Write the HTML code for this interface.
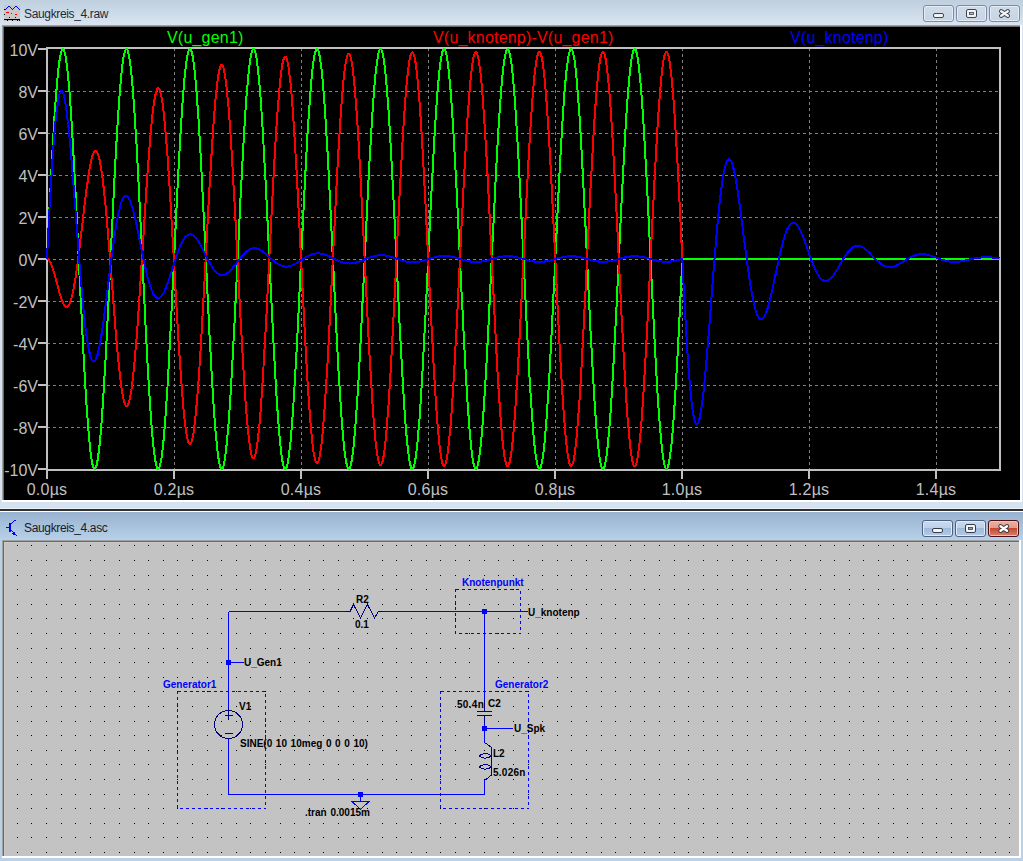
<!DOCTYPE html>
<html><head><meta charset="utf-8">
<style>
html,body{margin:0;padding:0;}
body{width:1023px;height:861px;overflow:hidden;position:relative;background:#b9d1ea;font-family:"Liberation Sans",sans-serif;}
.abs{position:absolute;}
/* top window */
#t1{left:0;top:0;width:1023px;height:25px;background:linear-gradient(#bfcfdd,#d9e5f1);}
#t1f{left:0;top:25px;width:1023px;height:483px;background:#d6e2ef;}
#plotbg{left:2px;top:25px;width:1020px;height:477px;background:#fff;}
#plotsh{left:2px;top:25px;width:1018px;height:475px;background:#a0a0a0;}
#plotsh2{left:3px;top:26px;width:1017px;height:474px;background:#696969;}
#plot{left:4px;top:27px;width:1016px;height:473px;background:#000;}
.ttl{font-size:12px;line-height:14px;letter-spacing:-0.35px;color:#1e2a3a;white-space:nowrap;}
.yl{position:absolute;left:0;width:38px;text-align:right;font-size:16px;line-height:18px;color:#c0c0c0;}
.xl{position:absolute;top:481px;width:80px;text-align:center;letter-spacing:0.25px;font-size:16px;line-height:18px;color:#c0c0c0;}
.leg{position:absolute;top:29px;letter-spacing:0.2px;font-size:16px;line-height:18px;white-space:nowrap;}
/* separator */
#sep1{left:0;top:508px;width:1023px;height:1px;background:#e6eef8;}
#sep2{left:0;top:509px;width:1023px;height:2px;background:#303030;}
#sep3{left:0;top:511px;width:1023px;height:1px;background:#fff;}
/* bottom window */
#t2{left:0;top:512px;width:1023px;height:28px;background:linear-gradient(#98b2cf,#b8d1ea);}
#t2f{left:0;top:540px;width:1023px;height:321px;background:#b9d1ea;}
#schw{left:2px;top:540px;width:1019px;height:318px;background:#fff;}
#schsh{left:2px;top:540px;width:1017px;height:316px;background:#a0a0a0;}
#schsh2{left:3px;top:541px;width:1016px;height:315px;background:#6a6a6a;}
#schsh3{left:4px;top:542px;width:1015px;height:314px;background:#cacaca;}
#sch{left:5px;top:543px;width:1014px;height:313px;background:#c3c3c3;}
.btn{position:absolute;width:29px;height:15px;border:1px solid #7b8aa8;border-radius:3px;box-shadow:inset 0 0 0 1px #e4ecf5;background:linear-gradient(#cfdbe8,#c6d4e4);}
.btn2{position:absolute;width:29px;height:15px;border:1px solid #4d6182;border-radius:3px;box-shadow:inset 0 0 0 1px #e0ebf7;background:linear-gradient(#c8daef 0%,#bcd0e8 48%,#9fb9d8 48%,#b4cbe6 100%);}
.btnc{position:absolute;width:29px;height:15px;border:1px solid #4a1018;border-radius:3px;box-shadow:inset 0 0 0 1px #f0c0b0;background:linear-gradient(#eab0a2 0%,#e39a88 48%,#c4462c 48%,#d98070 100%);}
.st{position:absolute;font-weight:bold;font-size:10px;line-height:12px;color:#000;white-space:nowrap;}
.sb{position:absolute;font-weight:bold;font-size:10px;line-height:12px;color:#0000ff;white-space:nowrap;}
</style></head><body>
<div class="abs" id="t1"></div>
<div class="abs" id="t1f"></div>
<div class="abs" id="plotbg"></div>
<div class="abs" id="plotsh"></div>
<div class="abs" id="plotsh2"></div>
<div class="abs" id="plot"></div>
<!-- top title -->
<svg class="abs" style="left:0;top:0" width="24" height="24" shape-rendering="crispEdges"><rect x="4" y="5" width="16" height="16" fill="#c8c8c8"/><rect x="5" y="9" width="1" height="1" fill="#0000ff"/><rect x="6" y="8" width="1" height="1" fill="#0000ff"/><rect x="7" y="7" width="1" height="1" fill="#0000ff"/><rect x="8" y="6" width="1" height="1" fill="#0000ff"/><rect x="9" y="6" width="1" height="1" fill="#0000ff"/><rect x="10" y="7" width="1" height="1" fill="#0000ff"/><rect x="11" y="8" width="1" height="1" fill="#0000ff"/><rect x="12" y="9" width="1" height="1" fill="#0000ff"/><rect x="13" y="8" width="1" height="1" fill="#0000ff"/><rect x="14" y="7" width="1" height="1" fill="#0000ff"/><rect x="15" y="6" width="1" height="1" fill="#0000ff"/><rect x="16" y="6" width="1" height="1" fill="#0000ff"/><rect x="17" y="7" width="1" height="1" fill="#0000ff"/><rect x="18" y="8" width="1" height="1" fill="#0000ff"/><rect x="19" y="9" width="1" height="1" fill="#0000ff"/><rect x="4" y="9" width="1" height="1" fill="#000"/><rect x="6" y="12" width="3" height="1" fill="#ff0000"/><rect x="11" y="13" width="1" height="1" fill="#ff0000"/><rect x="15" y="14" width="2" height="1" fill="#ff0000"/><rect x="4" y="14" width="1" height="1" fill="#000"/><rect x="9" y="17" width="1" height="1" fill="#000080"/><rect x="15" y="17" width="1" height="1" fill="#000080"/><rect x="4" y="19" width="16" height="1" fill="#000"/><rect x="7" y="20" width="1" height="1" fill="#000"/><rect x="12" y="20" width="1" height="1" fill="#000"/><rect x="17" y="20" width="1" height="1" fill="#000"/><rect x="19" y="20" width="1" height="1" fill="#000"/></svg>
<div class="abs ttl" style="left:24px;top:7px">Saugkreis_4.raw</div>
<div class="btn" style="left:923px;top:5px"></div>
<div class="btn" style="left:956px;top:5px"></div>
<div class="btn" style="left:989px;top:5px"></div>
<svg class="abs" style="left:920px;top:0" width="103" height="26">
<rect x="13.5" y="13.5" width="10" height="4" rx="1.5" fill="#f2f2f2" stroke="#3e4452"/>
<rect x="46.5" y="9.5" width="10" height="8" rx="1.5" fill="#f2f2f2" stroke="#3e4452"/>
<rect x="49.5" y="12.5" width="4" height="2" fill="#b0c2d8" stroke="#3e4452" stroke-width="0.8"/>
<path d="M81.2 11.2 L87.8 15.8 M87.8 11.2 L81.2 15.8" stroke="#3a3f4a" stroke-width="4.4" stroke-linecap="round"/>
<path d="M81.2 11.2 L87.8 15.8 M87.8 11.2 L81.2 15.8" stroke="#f4f4f4" stroke-width="2.4" stroke-linecap="round"/>
</svg>
<svg class="abs" width="1023" height="861" style="left:0;top:0" shape-rendering="crispEdges"><line x1="47" y1="91.5" x2="999" y2="91.5" stroke="#808080" stroke-width="1" stroke-dasharray="3 3"/>
<line x1="47" y1="133.5" x2="999" y2="133.5" stroke="#808080" stroke-width="1" stroke-dasharray="3 3"/>
<line x1="47" y1="175.5" x2="999" y2="175.5" stroke="#808080" stroke-width="1" stroke-dasharray="3 3"/>
<line x1="47" y1="217.5" x2="999" y2="217.5" stroke="#808080" stroke-width="1" stroke-dasharray="3 3"/>
<line x1="47" y1="259.5" x2="999" y2="259.5" stroke="#808080" stroke-width="1" stroke-dasharray="3 3"/>
<line x1="47" y1="301.5" x2="999" y2="301.5" stroke="#808080" stroke-width="1" stroke-dasharray="3 3"/>
<line x1="47" y1="343.5" x2="999" y2="343.5" stroke="#808080" stroke-width="1" stroke-dasharray="3 3"/>
<line x1="47" y1="385.5" x2="999" y2="385.5" stroke="#808080" stroke-width="1" stroke-dasharray="3 3"/>
<line x1="47" y1="427.5" x2="999" y2="427.5" stroke="#808080" stroke-width="1" stroke-dasharray="3 3"/>
<line x1="174.5" y1="48" x2="174.5" y2="469" stroke="#808080" stroke-width="1" stroke-dasharray="3 3"/>
<line x1="301.5" y1="48" x2="301.5" y2="469" stroke="#808080" stroke-width="1" stroke-dasharray="3 3"/>
<line x1="428.5" y1="48" x2="428.5" y2="469" stroke="#808080" stroke-width="1" stroke-dasharray="3 3"/>
<line x1="555.5" y1="48" x2="555.5" y2="469" stroke="#808080" stroke-width="1" stroke-dasharray="3 3"/>
<line x1="682.5" y1="48" x2="682.5" y2="469" stroke="#808080" stroke-width="1" stroke-dasharray="3 3"/>
<line x1="809.5" y1="48" x2="809.5" y2="469" stroke="#808080" stroke-width="1" stroke-dasharray="3 3"/>
<line x1="936.5" y1="48" x2="936.5" y2="469" stroke="#808080" stroke-width="1" stroke-dasharray="3 3"/>
<rect x="47" y="48" width="953" height="422" fill="none" stroke="#c0c0c0" stroke-width="2"/>
<rect x="38" y="48" width="8" height="2" fill="#c0c0c0"/>
<rect x="38" y="90" width="8" height="2" fill="#c0c0c0"/>
<rect x="38" y="132" width="8" height="2" fill="#c0c0c0"/>
<rect x="38" y="174" width="8" height="2" fill="#c0c0c0"/>
<rect x="38" y="216" width="8" height="2" fill="#c0c0c0"/>
<rect x="38" y="258" width="8" height="2" fill="#c0c0c0"/>
<rect x="38" y="300" width="8" height="2" fill="#c0c0c0"/>
<rect x="38" y="342" width="8" height="2" fill="#c0c0c0"/>
<rect x="38" y="384" width="8" height="2" fill="#c0c0c0"/>
<rect x="38" y="426" width="8" height="2" fill="#c0c0c0"/>
<rect x="38" y="468" width="8" height="2" fill="#c0c0c0"/>
<rect x="46" y="471" width="2" height="8" fill="#c0c0c0"/>
<rect x="173" y="471" width="2" height="8" fill="#c0c0c0"/>
<rect x="300" y="471" width="2" height="8" fill="#c0c0c0"/>
<rect x="427" y="471" width="2" height="8" fill="#c0c0c0"/>
<rect x="554" y="471" width="2" height="8" fill="#c0c0c0"/>
<rect x="681" y="471" width="2" height="8" fill="#c0c0c0"/>
<rect x="808" y="471" width="2" height="8" fill="#c0c0c0"/>
<rect x="935" y="471" width="2" height="8" fill="#c0c0c0"/>
<polyline points="47.0,259.0 47.5,248.4 48.0,237.9 48.5,227.5 49.0,217.1 49.5,206.8 50.0,196.6 50.6,186.6 51.1,176.8 51.6,167.2 52.1,157.8 52.6,148.7 53.1,139.9 53.6,131.3 54.1,123.1 54.6,115.2 55.1,107.7 55.6,100.6 56.1,93.9 56.7,87.6 57.2,81.7 57.7,76.3 58.2,71.3 58.7,66.8 59.2,62.8 59.7,59.3 60.2,56.3 60.7,53.8 61.2,51.8 61.7,50.3 62.2,49.4 62.8,49.0 63.3,49.1 63.8,49.8 64.3,51.0 64.8,52.7 65.3,55.0 65.8,57.7 66.3,61.0 66.8,64.7 67.3,69.0 67.8,73.7 68.3,78.9 68.9,84.6 69.4,90.7 69.9,97.2 70.4,104.1 70.9,111.4 71.4,119.1 71.9,127.2 72.4,135.6 72.9,144.3 73.4,153.2 73.9,162.5 74.4,172.0 75.0,181.7 75.5,191.6 76.0,201.7 76.5,211.9 77.0,222.2 77.5,232.7 78.0,243.2 78.5,253.7 79.0,264.3 79.5,274.8 80.0,285.3 80.5,295.8 81.1,306.1 81.6,316.3 82.1,326.4 82.6,336.3 83.1,346.0 83.6,355.5 84.1,364.8 84.6,373.7 85.1,382.4 85.6,390.8 86.1,398.9 86.6,406.6 87.2,413.9 87.7,420.8 88.2,427.3 88.7,433.4 89.2,439.1 89.7,444.3 90.2,449.0 90.7,453.3 91.2,457.0 91.7,460.3 92.2,463.0 92.7,465.3 93.3,467.0 93.8,468.2 94.3,468.9 94.8,469.0 95.3,468.6 95.8,467.7 96.3,466.2 96.8,464.2 97.3,461.7 97.8,458.7 98.3,455.2 98.8,451.2 99.4,446.7 99.9,441.7 100.4,436.3 100.9,430.4 101.4,424.1 101.9,417.4 102.4,410.3 102.9,402.8 103.4,394.9 103.9,386.7 104.4,378.1 104.9,369.3 105.5,360.2 106.0,350.8 106.5,341.2 107.0,331.4 107.5,321.4 108.0,311.2 108.5,300.9 109.0,290.5 109.5,280.1 110.0,269.6 110.5,259.0 111.0,248.4 111.5,237.9 112.1,227.5 112.6,217.1 113.1,206.8 113.6,196.6 114.1,186.6 114.6,176.8 115.1,167.2 115.6,157.8 116.1,148.7 116.6,139.9 117.1,131.3 117.6,123.1 118.2,115.2 118.7,107.7 119.2,100.6 119.7,93.9 120.2,87.6 120.7,81.7 121.2,76.3 121.7,71.3 122.2,66.8 122.7,62.8 123.2,59.3 123.7,56.3 124.3,53.8 124.8,51.8 125.3,50.3 125.8,49.4 126.3,49.0 126.8,49.1 127.3,49.8 127.8,51.0 128.3,52.7 128.8,55.0 129.3,57.7 129.8,61.0 130.4,64.7 130.9,69.0 131.4,73.7 131.9,78.9 132.4,84.6 132.9,90.7 133.4,97.2 133.9,104.1 134.4,111.4 134.9,119.1 135.4,127.2 135.9,135.6 136.5,144.3 137.0,153.2 137.5,162.5 138.0,172.0 138.5,181.7 139.0,191.6 139.5,201.7 140.0,211.9 140.5,222.2 141.0,232.7 141.5,243.2 142.0,253.7 142.6,264.3 143.1,274.8 143.6,285.3 144.1,295.8 144.6,306.1 145.1,316.3 145.6,326.4 146.1,336.3 146.6,346.0 147.1,355.5 147.6,364.8 148.1,373.7 148.7,382.4 149.2,390.8 149.7,398.9 150.2,406.6 150.7,413.9 151.2,420.8 151.7,427.3 152.2,433.4 152.7,439.1 153.2,444.3 153.7,449.0 154.2,453.3 154.8,457.0 155.3,460.3 155.8,463.0 156.3,465.3 156.8,467.0 157.3,468.2 157.8,468.9 158.3,469.0 158.8,468.6 159.3,467.7 159.8,466.2 160.3,464.2 160.9,461.7 161.4,458.7 161.9,455.2 162.4,451.2 162.9,446.7 163.4,441.7 163.9,436.3 164.4,430.4 164.9,424.1 165.4,417.4 165.9,410.3 166.4,402.8 167.0,394.9 167.5,386.7 168.0,378.1 168.5,369.3 169.0,360.2 169.5,350.8 170.0,341.2 170.5,331.4 171.0,321.4 171.5,311.2 172.0,300.9 172.5,290.5 173.1,280.1 173.6,269.6 174.1,259.0 174.6,248.4 175.1,237.9 175.6,227.5 176.1,217.1 176.6,206.8 177.1,196.6 177.6,186.6 178.1,176.8 178.6,167.2 179.1,157.8 179.7,148.7 180.2,139.9 180.7,131.3 181.2,123.1 181.7,115.2 182.2,107.7 182.7,100.6 183.2,93.9 183.7,87.6 184.2,81.7 184.7,76.3 185.2,71.3 185.8,66.8 186.3,62.8 186.8,59.3 187.3,56.3 187.8,53.8 188.3,51.8 188.8,50.3 189.3,49.4 189.8,49.0 190.3,49.1 190.8,49.8 191.3,51.0 191.9,52.7 192.4,55.0 192.9,57.7 193.4,61.0 193.9,64.7 194.4,69.0 194.9,73.7 195.4,78.9 195.9,84.6 196.4,90.7 196.9,97.2 197.4,104.1 198.0,111.4 198.5,119.1 199.0,127.2 199.5,135.6 200.0,144.3 200.5,153.2 201.0,162.5 201.5,172.0 202.0,181.7 202.5,191.6 203.0,201.7 203.5,211.9 204.1,222.2 204.6,232.7 205.1,243.2 205.6,253.7 206.1,264.3 206.6,274.8 207.1,285.3 207.6,295.8 208.1,306.1 208.6,316.3 209.1,326.4 209.6,336.3 210.2,346.0 210.7,355.5 211.2,364.8 211.7,373.7 212.2,382.4 212.7,390.8 213.2,398.9 213.7,406.6 214.2,413.9 214.7,420.8 215.2,427.3 215.7,433.4 216.3,439.1 216.8,444.3 217.3,449.0 217.8,453.3 218.3,457.0 218.8,460.3 219.3,463.0 219.8,465.3 220.3,467.0 220.8,468.2 221.3,468.9 221.8,469.0 222.4,468.6 222.9,467.7 223.4,466.2 223.9,464.2 224.4,461.7 224.9,458.7 225.4,455.2 225.9,451.2 226.4,446.7 226.9,441.7 227.4,436.3 227.9,430.4 228.5,424.1 229.0,417.4 229.5,410.3 230.0,402.8 230.5,394.9 231.0,386.7 231.5,378.1 232.0,369.3 232.5,360.2 233.0,350.8 233.5,341.2 234.0,331.4 234.6,321.4 235.1,311.2 235.6,300.9 236.1,290.5 236.6,280.1 237.1,269.6 237.6,259.0 238.1,248.4 238.6,237.9 239.1,227.5 239.6,217.1 240.1,206.8 240.6,196.6 241.2,186.6 241.7,176.8 242.2,167.2 242.7,157.8 243.2,148.7 243.7,139.9 244.2,131.3 244.7,123.1 245.2,115.2 245.7,107.7 246.2,100.6 246.7,93.9 247.3,87.6 247.8,81.7 248.3,76.3 248.8,71.3 249.3,66.8 249.8,62.8 250.3,59.3 250.8,56.3 251.3,53.8 251.8,51.8 252.3,50.3 252.8,49.4 253.4,49.0 253.9,49.1 254.4,49.8 254.9,51.0 255.4,52.7 255.9,55.0 256.4,57.7 256.9,61.0 257.4,64.7 257.9,69.0 258.4,73.7 258.9,78.9 259.5,84.6 260.0,90.7 260.5,97.2 261.0,104.1 261.5,111.4 262.0,119.1 262.5,127.2 263.0,135.6 263.5,144.3 264.0,153.2 264.5,162.5 265.0,172.0 265.6,181.7 266.1,191.6 266.6,201.7 267.1,211.9 267.6,222.2 268.1,232.7 268.6,243.2 269.1,253.7 269.6,264.3 270.1,274.8 270.6,285.3 271.1,295.8 271.7,306.1 272.2,316.3 272.7,326.4 273.2,336.3 273.7,346.0 274.2,355.5 274.7,364.8 275.2,373.7 275.7,382.4 276.2,390.8 276.7,398.9 277.2,406.6 277.8,413.9 278.3,420.8 278.8,427.3 279.3,433.4 279.8,439.1 280.3,444.3 280.8,449.0 281.3,453.3 281.8,457.0 282.3,460.3 282.8,463.0 283.3,465.3 283.9,467.0 284.4,468.2 284.9,468.9 285.4,469.0 285.9,468.6 286.4,467.7 286.9,466.2 287.4,464.2 287.9,461.7 288.4,458.7 288.9,455.2 289.4,451.2 290.0,446.7 290.5,441.7 291.0,436.3 291.5,430.4 292.0,424.1 292.5,417.4 293.0,410.3 293.5,402.8 294.0,394.9 294.5,386.7 295.0,378.1 295.5,369.3 296.1,360.2 296.6,350.8 297.1,341.2 297.6,331.4 298.1,321.4 298.6,311.2 299.1,300.9 299.6,290.5 300.1,280.1 300.6,269.6 301.1,259.0 301.6,248.4 302.1,237.9 302.7,227.5 303.2,217.1 303.7,206.8 304.2,196.6 304.7,186.6 305.2,176.8 305.7,167.2 306.2,157.8 306.7,148.7 307.2,139.9 307.7,131.3 308.2,123.1 308.8,115.2 309.3,107.7 309.8,100.6 310.3,93.9 310.8,87.6 311.3,81.7 311.8,76.3 312.3,71.3 312.8,66.8 313.3,62.8 313.8,59.3 314.3,56.3 314.9,53.8 315.4,51.8 315.9,50.3 316.4,49.4 316.9,49.0 317.4,49.1 317.9,49.8 318.4,51.0 318.9,52.7 319.4,55.0 319.9,57.7 320.4,61.0 321.0,64.7 321.5,69.0 322.0,73.7 322.5,78.9 323.0,84.6 323.5,90.7 324.0,97.2 324.5,104.1 325.0,111.4 325.5,119.1 326.0,127.2 326.5,135.6 327.1,144.3 327.6,153.2 328.1,162.5 328.6,172.0 329.1,181.7 329.6,191.6 330.1,201.7 330.6,211.9 331.1,222.2 331.6,232.7 332.1,243.2 332.6,253.7 333.2,264.3 333.7,274.8 334.2,285.3 334.7,295.8 335.2,306.1 335.7,316.3 336.2,326.4 336.7,336.3 337.2,346.0 337.7,355.5 338.2,364.8 338.7,373.7 339.3,382.4 339.8,390.8 340.3,398.9 340.8,406.6 341.3,413.9 341.8,420.8 342.3,427.3 342.8,433.4 343.3,439.1 343.8,444.3 344.3,449.0 344.8,453.3 345.4,457.0 345.9,460.3 346.4,463.0 346.9,465.3 347.4,467.0 347.9,468.2 348.4,468.9 348.9,469.0 349.4,468.6 349.9,467.7 350.4,466.2 350.9,464.2 351.5,461.7 352.0,458.7 352.5,455.2 353.0,451.2 353.5,446.7 354.0,441.7 354.5,436.3 355.0,430.4 355.5,424.1 356.0,417.4 356.5,410.3 357.0,402.8 357.6,394.9 358.1,386.7 358.6,378.1 359.1,369.3 359.6,360.2 360.1,350.8 360.6,341.2 361.1,331.4 361.6,321.4 362.1,311.2 362.6,300.9 363.1,290.5 363.7,280.1 364.2,269.6 364.7,259.0 365.2,248.4 365.7,237.9 366.2,227.5 366.7,217.1 367.2,206.8 367.7,196.6 368.2,186.6 368.7,176.8 369.2,167.2 369.7,157.8 370.3,148.7 370.8,139.9 371.3,131.3 371.8,123.1 372.3,115.2 372.8,107.7 373.3,100.6 373.8,93.9 374.3,87.6 374.8,81.7 375.3,76.3 375.8,71.3 376.4,66.8 376.9,62.8 377.4,59.3 377.9,56.3 378.4,53.8 378.9,51.8 379.4,50.3 379.9,49.4 380.4,49.0 380.9,49.1 381.4,49.8 381.9,51.0 382.5,52.7 383.0,55.0 383.5,57.7 384.0,61.0 384.5,64.7 385.0,69.0 385.5,73.7 386.0,78.9 386.5,84.6 387.0,90.7 387.5,97.2 388.0,104.1 388.6,111.4 389.1,119.1 389.6,127.2 390.1,135.6 390.6,144.3 391.1,153.2 391.6,162.5 392.1,172.0 392.6,181.7 393.1,191.6 393.6,201.7 394.1,211.9 394.7,222.2 395.2,232.7 395.7,243.2 396.2,253.7 396.7,264.3 397.2,274.8 397.7,285.3 398.2,295.8 398.7,306.1 399.2,316.3 399.7,326.4 400.2,336.3 400.8,346.0 401.3,355.5 401.8,364.8 402.3,373.7 402.8,382.4 403.3,390.8 403.8,398.9 404.3,406.6 404.8,413.9 405.3,420.8 405.8,427.3 406.3,433.4 406.9,439.1 407.4,444.3 407.9,449.0 408.4,453.3 408.9,457.0 409.4,460.3 409.9,463.0 410.4,465.3 410.9,467.0 411.4,468.2 411.9,468.9 412.4,469.0 413.0,468.6 413.5,467.7 414.0,466.2 414.5,464.2 415.0,461.7 415.5,458.7 416.0,455.2 416.5,451.2 417.0,446.7 417.5,441.7 418.0,436.3 418.5,430.4 419.1,424.1 419.6,417.4 420.1,410.3 420.6,402.8 421.1,394.9 421.6,386.7 422.1,378.1 422.6,369.3 423.1,360.2 423.6,350.8 424.1,341.2 424.6,331.4 425.2,321.4 425.7,311.2 426.2,300.9 426.7,290.5 427.2,280.1 427.7,269.6 428.2,259.0 428.7,248.4 429.2,237.9 429.7,227.5 430.2,217.1 430.7,206.8 431.2,196.6 431.8,186.6 432.3,176.8 432.8,167.2 433.3,157.8 433.8,148.7 434.3,139.9 434.8,131.3 435.3,123.1 435.8,115.2 436.3,107.7 436.8,100.6 437.3,93.9 437.9,87.6 438.4,81.7 438.9,76.3 439.4,71.3 439.9,66.8 440.4,62.8 440.9,59.3 441.4,56.3 441.9,53.8 442.4,51.8 442.9,50.3 443.4,49.4 444.0,49.0 444.5,49.1 445.0,49.8 445.5,51.0 446.0,52.7 446.5,55.0 447.0,57.7 447.5,61.0 448.0,64.7 448.5,69.0 449.0,73.7 449.5,78.9 450.1,84.6 450.6,90.7 451.1,97.2 451.6,104.1 452.1,111.4 452.6,119.1 453.1,127.2 453.6,135.6 454.1,144.3 454.6,153.2 455.1,162.5 455.6,172.0 456.2,181.7 456.7,191.6 457.2,201.7 457.7,211.9 458.2,222.2 458.7,232.7 459.2,243.2 459.7,253.7 460.2,264.3 460.7,274.8 461.2,285.3 461.7,295.8 462.3,306.1 462.8,316.3 463.3,326.4 463.8,336.3 464.3,346.0 464.8,355.5 465.3,364.8 465.8,373.7 466.3,382.4 466.8,390.8 467.3,398.9 467.8,406.6 468.4,413.9 468.9,420.8 469.4,427.3 469.9,433.4 470.4,439.1 470.9,444.3 471.4,449.0 471.9,453.3 472.4,457.0 472.9,460.3 473.4,463.0 473.9,465.3 474.5,467.0 475.0,468.2 475.5,468.9 476.0,469.0 476.5,468.6 477.0,467.7 477.5,466.2 478.0,464.2 478.5,461.7 479.0,458.7 479.5,455.2 480.0,451.2 480.6,446.7 481.1,441.7 481.6,436.3 482.1,430.4 482.6,424.1 483.1,417.4 483.6,410.3 484.1,402.8 484.6,394.9 485.1,386.7 485.6,378.1 486.1,369.3 486.7,360.2 487.2,350.8 487.7,341.2 488.2,331.4 488.7,321.4 489.2,311.2 489.7,300.9 490.2,290.5 490.7,280.1 491.2,269.6 491.7,259.0 492.2,248.4 492.7,237.9 493.3,227.5 493.8,217.1 494.3,206.8 494.8,196.6 495.3,186.6 495.8,176.8 496.3,167.2 496.8,157.8 497.3,148.7 497.8,139.9 498.3,131.3 498.8,123.1 499.4,115.2 499.9,107.7 500.4,100.6 500.9,93.9 501.4,87.6 501.9,81.7 502.4,76.3 502.9,71.3 503.4,66.8 503.9,62.8 504.4,59.3 504.9,56.3 505.5,53.8 506.0,51.8 506.5,50.3 507.0,49.4 507.5,49.0 508.0,49.1 508.5,49.8 509.0,51.0 509.5,52.7 510.0,55.0 510.5,57.7 511.0,61.0 511.6,64.7 512.1,69.0 512.6,73.7 513.1,78.9 513.6,84.6 514.1,90.7 514.6,97.2 515.1,104.1 515.6,111.4 516.1,119.1 516.6,127.2 517.1,135.6 517.7,144.3 518.2,153.2 518.7,162.5 519.2,172.0 519.7,181.7 520.2,191.6 520.7,201.7 521.2,211.9 521.7,222.2 522.2,232.7 522.7,243.2 523.2,253.7 523.8,264.3 524.3,274.8 524.8,285.3 525.3,295.8 525.8,306.1 526.3,316.3 526.8,326.4 527.3,336.3 527.8,346.0 528.3,355.5 528.8,364.8 529.3,373.7 529.9,382.4 530.4,390.8 530.9,398.9 531.4,406.6 531.9,413.9 532.4,420.8 532.9,427.3 533.4,433.4 533.9,439.1 534.4,444.3 534.9,449.0 535.4,453.3 536.0,457.0 536.5,460.3 537.0,463.0 537.5,465.3 538.0,467.0 538.5,468.2 539.0,468.9 539.5,469.0 540.0,468.6 540.5,467.7 541.0,466.2 541.5,464.2 542.1,461.7 542.6,458.7 543.1,455.2 543.6,451.2 544.1,446.7 544.6,441.7 545.1,436.3 545.6,430.4 546.1,424.1 546.6,417.4 547.1,410.3 547.6,402.8 548.2,394.9 548.7,386.7 549.2,378.1 549.7,369.3 550.2,360.2 550.7,350.8 551.2,341.2 551.7,331.4 552.2,321.4 552.7,311.2 553.2,300.9 553.7,290.5 554.3,280.1 554.8,269.6 555.3,259.0 555.8,248.4 556.3,237.9 556.8,227.5 557.3,217.1 557.8,206.8 558.3,196.6 558.8,186.6 559.3,176.8 559.8,167.2 560.3,157.8 560.9,148.7 561.4,139.9 561.9,131.3 562.4,123.1 562.9,115.2 563.4,107.7 563.9,100.6 564.4,93.9 564.9,87.6 565.4,81.7 565.9,76.3 566.4,71.3 567.0,66.8 567.5,62.8 568.0,59.3 568.5,56.3 569.0,53.8 569.5,51.8 570.0,50.3 570.5,49.4 571.0,49.0 571.5,49.1 572.0,49.8 572.5,51.0 573.1,52.7 573.6,55.0 574.1,57.7 574.6,61.0 575.1,64.7 575.6,69.0 576.1,73.7 576.6,78.9 577.1,84.6 577.6,90.7 578.1,97.2 578.6,104.1 579.2,111.4 579.7,119.1 580.2,127.2 580.7,135.6 581.2,144.3 581.7,153.2 582.2,162.5 582.7,172.0 583.2,181.7 583.7,191.6 584.2,201.7 584.7,211.9 585.3,222.2 585.8,232.7 586.3,243.2 586.8,253.7 587.3,264.3 587.8,274.8 588.3,285.3 588.8,295.8 589.3,306.1 589.8,316.3 590.3,326.4 590.8,336.3 591.4,346.0 591.9,355.5 592.4,364.8 592.9,373.7 593.4,382.4 593.9,390.8 594.4,398.9 594.9,406.6 595.4,413.9 595.9,420.8 596.4,427.3 596.9,433.4 597.5,439.1 598.0,444.3 598.5,449.0 599.0,453.3 599.5,457.0 600.0,460.3 600.5,463.0 601.0,465.3 601.5,467.0 602.0,468.2 602.5,468.9 603.0,469.0 603.6,468.6 604.1,467.7 604.6,466.2 605.1,464.2 605.6,461.7 606.1,458.7 606.6,455.2 607.1,451.2 607.6,446.7 608.1,441.7 608.6,436.3 609.1,430.4 609.7,424.1 610.2,417.4 610.7,410.3 611.2,402.8 611.7,394.9 612.2,386.7 612.7,378.1 613.2,369.3 613.7,360.2 614.2,350.8 614.7,341.2 615.2,331.4 615.8,321.4 616.3,311.2 616.8,300.9 617.3,290.5 617.8,280.1 618.3,269.6 618.8,259.0 619.3,248.4 619.8,237.9 620.3,227.5 620.8,217.1 621.3,206.8 621.8,196.6 622.4,186.6 622.9,176.8 623.4,167.2 623.9,157.8 624.4,148.7 624.9,139.9 625.4,131.3 625.9,123.1 626.4,115.2 626.9,107.7 627.4,100.6 627.9,93.9 628.5,87.6 629.0,81.7 629.5,76.3 630.0,71.3 630.5,66.8 631.0,62.8 631.5,59.3 632.0,56.3 632.5,53.8 633.0,51.8 633.5,50.3 634.0,49.4 634.6,49.0 635.1,49.1 635.6,49.8 636.1,51.0 636.6,52.7 637.1,55.0 637.6,57.7 638.1,61.0 638.6,64.7 639.1,69.0 639.6,73.7 640.1,78.9 640.7,84.6 641.2,90.7 641.7,97.2 642.2,104.1 642.7,111.4 643.2,119.1 643.7,127.2 644.2,135.6 644.7,144.3 645.2,153.2 645.7,162.5 646.2,172.0 646.8,181.7 647.3,191.6 647.8,201.7 648.3,211.9 648.8,222.2 649.3,232.7 649.8,243.2 650.3,253.7 650.8,264.3 651.3,274.8 651.8,285.3 652.3,295.8 652.9,306.1 653.4,316.3 653.9,326.4 654.4,336.3 654.9,346.0 655.4,355.5 655.9,364.8 656.4,373.7 656.9,382.4 657.4,390.8 657.9,398.9 658.4,406.6 659.0,413.9 659.5,420.8 660.0,427.3 660.5,433.4 661.0,439.1 661.5,444.3 662.0,449.0 662.5,453.3 663.0,457.0 663.5,460.3 664.0,463.0 664.5,465.3 665.1,467.0 665.6,468.2 666.1,468.9 666.6,469.0 667.1,468.6 667.6,467.7 668.1,466.2 668.6,464.2 669.1,461.7 669.6,458.7 670.1,455.2 670.6,451.2 671.2,446.7 671.7,441.7 672.2,436.3 672.7,430.4 673.2,424.1 673.7,417.4 674.2,410.3 674.7,402.8 675.2,394.9 675.7,386.7 676.2,378.1 676.7,369.3 677.3,360.2 677.8,350.8 678.3,341.2 678.8,331.4 679.3,321.4 679.8,311.2 680.3,300.9 680.8,290.5 681.3,280.1 681.8,269.6 682.3,259.0 682.8,259.0 683.3,259.0 683.9,259.0 684.4,259.0 684.9,259.0 685.4,259.0 685.9,259.0 686.4,259.0 686.9,259.0 687.4,259.0 687.9,259.0 688.4,259.0 688.9,259.0 689.4,259.0 690.0,259.0 690.5,259.0 691.0,259.0 691.5,259.0 692.0,259.0 692.5,259.0 693.0,259.0 693.5,259.0 694.0,259.0 694.5,259.0 695.0,259.0 695.5,259.0 696.1,259.0 696.6,259.0 697.1,259.0 697.6,259.0 698.1,259.0 698.6,259.0 699.1,259.0 699.6,259.0 700.1,259.0 700.6,259.0 701.1,259.0 701.6,259.0 702.2,259.0 702.7,259.0 703.2,259.0 703.7,259.0 704.2,259.0 704.7,259.0 705.2,259.0 705.7,259.0 706.2,259.0 706.7,259.0 707.2,259.0 707.7,259.0 708.3,259.0 708.8,259.0 709.3,259.0 709.8,259.0 710.3,259.0 710.8,259.0 711.3,259.0 711.8,259.0 712.3,259.0 712.8,259.0 713.3,259.0 713.8,259.0 714.4,259.0 714.9,259.0 715.4,259.0 715.9,259.0 716.4,259.0 716.9,259.0 717.4,259.0 717.9,259.0 718.4,259.0 718.9,259.0 719.4,259.0 719.9,259.0 720.5,259.0 721.0,259.0 721.5,259.0 722.0,259.0 722.5,259.0 723.0,259.0 723.5,259.0 724.0,259.0 724.5,259.0 725.0,259.0 725.5,259.0 726.0,259.0 726.6,259.0 727.1,259.0 727.6,259.0 728.1,259.0 728.6,259.0 729.1,259.0 729.6,259.0 730.1,259.0 730.6,259.0 731.1,259.0 731.6,259.0 732.1,259.0 732.7,259.0 733.2,259.0 733.7,259.0 734.2,259.0 734.7,259.0 735.2,259.0 735.7,259.0 736.2,259.0 736.7,259.0 737.2,259.0 737.7,259.0 738.2,259.0 738.8,259.0 739.3,259.0 739.8,259.0 740.3,259.0 740.8,259.0 741.3,259.0 741.8,259.0 742.3,259.0 742.8,259.0 743.3,259.0 743.8,259.0 744.3,259.0 744.9,259.0 745.4,259.0 745.9,259.0 746.4,259.0 746.9,259.0 747.4,259.0 747.9,259.0 748.4,259.0 748.9,259.0 749.4,259.0 749.9,259.0 750.4,259.0 750.9,259.0 751.5,259.0 752.0,259.0 752.5,259.0 753.0,259.0 753.5,259.0 754.0,259.0 754.5,259.0 755.0,259.0 755.5,259.0 756.0,259.0 756.5,259.0 757.0,259.0 757.6,259.0 758.1,259.0 758.6,259.0 759.1,259.0 759.6,259.0 760.1,259.0 760.6,259.0 761.1,259.0 761.6,259.0 762.1,259.0 762.6,259.0 763.1,259.0 763.7,259.0 764.2,259.0 764.7,259.0 765.2,259.0 765.7,259.0 766.2,259.0 766.7,259.0 767.2,259.0 767.7,259.0 768.2,259.0 768.7,259.0 769.2,259.0 769.8,259.0 770.3,259.0 770.8,259.0 771.3,259.0 771.8,259.0 772.3,259.0 772.8,259.0 773.3,259.0 773.8,259.0 774.3,259.0 774.8,259.0 775.3,259.0 775.9,259.0 776.4,259.0 776.9,259.0 777.4,259.0 777.9,259.0 778.4,259.0 778.9,259.0 779.4,259.0 779.9,259.0 780.4,259.0 780.9,259.0 781.4,259.0 782.0,259.0 782.5,259.0 783.0,259.0 783.5,259.0 784.0,259.0 784.5,259.0 785.0,259.0 785.5,259.0 786.0,259.0 786.5,259.0 787.0,259.0 787.5,259.0 788.1,259.0 788.6,259.0 789.1,259.0 789.6,259.0 790.1,259.0 790.6,259.0 791.1,259.0 791.6,259.0 792.1,259.0 792.6,259.0 793.1,259.0 793.6,259.0 794.2,259.0 794.7,259.0 795.2,259.0 795.7,259.0 796.2,259.0 796.7,259.0 797.2,259.0 797.7,259.0 798.2,259.0 798.7,259.0 799.2,259.0 799.7,259.0 800.3,259.0 800.8,259.0 801.3,259.0 801.8,259.0 802.3,259.0 802.8,259.0 803.3,259.0 803.8,259.0 804.3,259.0 804.8,259.0 805.3,259.0 805.8,259.0 806.4,259.0 806.9,259.0 807.4,259.0 807.9,259.0 808.4,259.0 808.9,259.0 809.4,259.0 809.9,259.0 810.4,259.0 810.9,259.0 811.4,259.0 811.9,259.0 812.4,259.0 813.0,259.0 813.5,259.0 814.0,259.0 814.5,259.0 815.0,259.0 815.5,259.0 816.0,259.0 816.5,259.0 817.0,259.0 817.5,259.0 818.0,259.0 818.5,259.0 819.1,259.0 819.6,259.0 820.1,259.0 820.6,259.0 821.1,259.0 821.6,259.0 822.1,259.0 822.6,259.0 823.1,259.0 823.6,259.0 824.1,259.0 824.6,259.0 825.2,259.0 825.7,259.0 826.2,259.0 826.7,259.0 827.2,259.0 827.7,259.0 828.2,259.0 828.7,259.0 829.2,259.0 829.7,259.0 830.2,259.0 830.7,259.0 831.3,259.0 831.8,259.0 832.3,259.0 832.8,259.0 833.3,259.0 833.8,259.0 834.3,259.0 834.8,259.0 835.3,259.0 835.8,259.0 836.3,259.0 836.8,259.0 837.4,259.0 837.9,259.0 838.4,259.0 838.9,259.0 839.4,259.0 839.9,259.0 840.4,259.0 840.9,259.0 841.4,259.0 841.9,259.0 842.4,259.0 842.9,259.0 843.5,259.0 844.0,259.0 844.5,259.0 845.0,259.0 845.5,259.0 846.0,259.0 846.5,259.0 847.0,259.0 847.5,259.0 848.0,259.0 848.5,259.0 849.0,259.0 849.6,259.0 850.1,259.0 850.6,259.0 851.1,259.0 851.6,259.0 852.1,259.0 852.6,259.0 853.1,259.0 853.6,259.0 854.1,259.0 854.6,259.0 855.1,259.0 855.7,259.0 856.2,259.0 856.7,259.0 857.2,259.0 857.7,259.0 858.2,259.0 858.7,259.0 859.2,259.0 859.7,259.0 860.2,259.0 860.7,259.0 861.2,259.0 861.8,259.0 862.3,259.0 862.8,259.0 863.3,259.0 863.8,259.0 864.3,259.0 864.8,259.0 865.3,259.0 865.8,259.0 866.3,259.0 866.8,259.0 867.3,259.0 867.9,259.0 868.4,259.0 868.9,259.0 869.4,259.0 869.9,259.0 870.4,259.0 870.9,259.0 871.4,259.0 871.9,259.0 872.4,259.0 872.9,259.0 873.4,259.0 873.9,259.0 874.5,259.0 875.0,259.0 875.5,259.0 876.0,259.0 876.5,259.0 877.0,259.0 877.5,259.0 878.0,259.0 878.5,259.0 879.0,259.0 879.5,259.0 880.0,259.0 880.6,259.0 881.1,259.0 881.6,259.0 882.1,259.0 882.6,259.0 883.1,259.0 883.6,259.0 884.1,259.0 884.6,259.0 885.1,259.0 885.6,259.0 886.1,259.0 886.7,259.0 887.2,259.0 887.7,259.0 888.2,259.0 888.7,259.0 889.2,259.0 889.7,259.0 890.2,259.0 890.7,259.0 891.2,259.0 891.7,259.0 892.2,259.0 892.8,259.0 893.3,259.0 893.8,259.0 894.3,259.0 894.8,259.0 895.3,259.0 895.8,259.0 896.3,259.0 896.8,259.0 897.3,259.0 897.8,259.0 898.3,259.0 898.9,259.0 899.4,259.0 899.9,259.0 900.4,259.0 900.9,259.0 901.4,259.0 901.9,259.0 902.4,259.0 902.9,259.0 903.4,259.0 903.9,259.0 904.4,259.0 905.0,259.0 905.5,259.0 906.0,259.0 906.5,259.0 907.0,259.0 907.5,259.0 908.0,259.0 908.5,259.0 909.0,259.0 909.5,259.0 910.0,259.0 910.5,259.0 911.1,259.0 911.6,259.0 912.1,259.0 912.6,259.0 913.1,259.0 913.6,259.0 914.1,259.0 914.6,259.0 915.1,259.0 915.6,259.0 916.1,259.0 916.6,259.0 917.2,259.0 917.7,259.0 918.2,259.0 918.7,259.0 919.2,259.0 919.7,259.0 920.2,259.0 920.7,259.0 921.2,259.0 921.7,259.0 922.2,259.0 922.7,259.0 923.3,259.0 923.8,259.0 924.3,259.0 924.8,259.0 925.3,259.0 925.8,259.0 926.3,259.0 926.8,259.0 927.3,259.0 927.8,259.0 928.3,259.0 928.8,259.0 929.4,259.0 929.9,259.0 930.4,259.0 930.9,259.0 931.4,259.0 931.9,259.0 932.4,259.0 932.9,259.0 933.4,259.0 933.9,259.0 934.4,259.0 934.9,259.0 935.5,259.0 936.0,259.0 936.5,259.0 937.0,259.0 937.5,259.0 938.0,259.0 938.5,259.0 939.0,259.0 939.5,259.0 940.0,259.0 940.5,259.0 941.0,259.0 941.5,259.0 942.1,259.0 942.6,259.0 943.1,259.0 943.6,259.0 944.1,259.0 944.6,259.0 945.1,259.0 945.6,259.0 946.1,259.0 946.6,259.0 947.1,259.0 947.6,259.0 948.2,259.0 948.7,259.0 949.2,259.0 949.7,259.0 950.2,259.0 950.7,259.0 951.2,259.0 951.7,259.0 952.2,259.0 952.7,259.0 953.2,259.0 953.7,259.0 954.3,259.0 954.8,259.0 955.3,259.0 955.8,259.0 956.3,259.0 956.8,259.0 957.3,259.0 957.8,259.0 958.3,259.0 958.8,259.0 959.3,259.0 959.8,259.0 960.4,259.0 960.9,259.0 961.4,259.0 961.9,259.0 962.4,259.0 962.9,259.0 963.4,259.0 963.9,259.0 964.4,259.0 964.9,259.0 965.4,259.0 965.9,259.0 966.5,259.0 967.0,259.0 967.5,259.0 968.0,259.0 968.5,259.0 969.0,259.0 969.5,259.0 970.0,259.0 970.5,259.0 971.0,259.0 971.5,259.0 972.0,259.0 972.6,259.0 973.1,259.0 973.6,259.0 974.1,259.0 974.6,259.0 975.1,259.0 975.6,259.0 976.1,259.0 976.6,259.0 977.1,259.0 977.6,259.0 978.1,259.0 978.7,259.0 979.2,259.0 979.7,259.0 980.2,259.0 980.7,259.0 981.2,259.0 981.7,259.0 982.2,259.0 982.7,259.0 983.2,259.0 983.7,259.0 984.2,259.0 984.8,259.0 985.3,259.0 985.8,259.0 986.3,259.0 986.8,259.0 987.3,259.0 987.8,259.0 988.3,259.0 988.8,259.0 989.3,259.0 989.8,259.0 990.3,259.0 990.9,259.0 991.4,259.0 991.9,259.0 992.4,259.0 992.9,259.0 993.4,259.0 993.9,259.0 994.4,259.0 994.9,259.0 995.4,259.0 995.9,259.0 996.4,259.0 997.0,259.0 997.5,259.0 998.0,259.0 998.5,259.0 999.0,259.0 999.5,259.0" fill="none" stroke="#00ff00" stroke-width="2" stroke-linejoin="round"/>
<polyline points="47.0,259.0 47.5,259.1 48.0,259.3 48.5,259.7 49.0,260.3 49.5,261.0 50.0,261.8 50.6,262.8 51.1,264.0 51.6,265.2 52.1,266.5 52.6,268.0 53.1,269.5 53.6,271.2 54.1,272.9 54.6,274.6 55.1,276.5 55.6,278.3 56.1,280.2 56.7,282.1 57.2,284.1 57.7,286.0 58.2,287.9 58.7,289.7 59.2,291.6 59.7,293.3 60.2,295.1 60.7,296.7 61.2,298.2 61.7,299.7 62.2,301.1 62.8,302.3 63.3,303.4 63.8,304.4 64.3,305.2 64.8,305.9 65.3,306.4 65.8,306.7 66.3,306.9 66.8,306.9 67.3,306.7 67.8,306.4 68.3,305.8 68.9,305.1 69.4,304.1 69.9,303.0 70.4,301.6 70.9,300.1 71.4,298.4 71.9,296.4 72.4,294.3 72.9,292.0 73.4,289.5 73.9,286.8 74.4,284.0 75.0,281.0 75.5,277.8 76.0,274.5 76.5,271.0 77.0,267.4 77.5,263.7 78.0,259.8 78.5,255.9 79.0,251.8 79.5,247.7 80.0,243.5 80.5,239.3 81.1,235.0 81.6,230.6 82.1,226.3 82.6,221.9 83.1,217.6 83.6,213.2 84.1,208.9 84.6,204.7 85.1,200.5 85.6,196.4 86.1,192.4 86.6,188.5 87.2,184.8 87.7,181.1 88.2,177.6 88.7,174.3 89.2,171.2 89.7,168.2 90.2,165.4 90.7,162.9 91.2,160.5 91.7,158.4 92.2,156.5 92.7,154.9 93.3,153.5 93.8,152.4 94.3,151.6 94.8,151.0 95.3,150.7 95.8,150.7 96.3,151.0 96.8,151.6 97.3,152.5 97.8,153.7 98.3,155.1 98.8,156.9 99.4,159.0 99.9,161.3 100.4,164.0 100.9,166.9 101.4,170.1 101.9,173.6 102.4,177.3 102.9,181.4 103.4,185.6 103.9,190.1 104.4,194.9 104.9,199.8 105.5,205.0 106.0,210.3 106.5,215.9 107.0,221.6 107.5,227.5 108.0,233.5 108.5,239.7 109.0,245.9 109.5,252.3 110.0,258.7 110.5,265.2 111.0,271.8 111.5,278.3 112.1,284.9 112.6,291.5 113.1,298.1 113.6,304.6 114.1,311.0 114.6,317.4 115.1,323.7 115.6,329.9 116.1,335.9 116.6,341.8 117.1,347.5 117.6,353.1 118.2,358.4 118.7,363.5 119.2,368.4 119.7,373.1 120.2,377.5 120.7,381.6 121.2,385.5 121.7,389.0 122.2,392.3 122.7,395.2 123.2,397.8 123.7,400.0 124.3,401.9 124.8,403.5 125.3,404.7 125.8,405.5 126.3,406.0 126.8,406.1 127.3,405.8 127.8,405.1 128.3,404.0 128.8,402.6 129.3,400.8 129.8,398.6 130.4,396.1 130.9,393.2 131.4,389.9 131.9,386.3 132.4,382.3 132.9,378.0 133.4,373.4 133.9,368.4 134.4,363.1 134.9,357.6 135.4,351.7 135.9,345.6 136.5,339.3 137.0,332.7 137.5,325.9 138.0,318.8 138.5,311.6 139.0,304.2 139.5,296.7 140.0,289.0 140.5,281.2 141.0,273.3 141.5,265.4 142.0,257.4 142.6,249.3 143.1,241.3 143.6,233.2 144.1,225.2 144.6,217.2 145.1,209.3 145.6,201.5 146.1,193.8 146.6,186.2 147.1,178.8 147.6,171.6 148.1,164.5 148.7,157.7 149.2,151.1 149.7,144.7 150.2,138.6 150.7,132.8 151.2,127.2 151.7,122.0 152.2,117.2 152.7,112.6 153.2,108.4 153.7,104.6 154.2,101.2 154.8,98.1 155.3,95.4 155.8,93.2 156.3,91.3 156.8,89.9 157.3,88.9 157.8,88.3 158.3,88.2 158.8,88.5 159.3,89.2 159.8,90.4 160.3,92.0 160.9,94.0 161.4,96.4 161.9,99.3 162.4,102.5 162.9,106.2 163.4,110.3 163.9,114.8 164.4,119.6 164.9,124.8 165.4,130.4 165.9,136.3 166.4,142.6 167.0,149.1 167.5,156.0 168.0,163.1 168.5,170.5 169.0,178.1 169.5,186.0 170.0,194.1 170.5,202.3 171.0,210.7 171.5,219.3 172.0,228.0 172.5,236.8 173.1,245.7 173.6,254.6 174.1,263.6 174.6,272.6 175.1,281.5 175.6,290.5 176.1,299.3 176.6,308.1 177.1,316.8 177.6,325.4 178.1,333.8 178.6,342.0 179.1,350.1 179.7,358.0 180.2,365.6 180.7,372.9 181.2,380.0 181.7,386.8 182.2,393.3 182.7,399.5 183.2,405.3 183.7,410.8 184.2,415.9 184.7,420.6 185.2,424.9 185.8,428.8 186.3,432.3 186.8,435.4 187.3,438.0 187.8,440.1 188.3,441.9 188.8,443.1 189.3,443.9 189.8,444.2 190.3,444.1 190.8,443.5 191.3,442.4 191.9,440.9 192.4,438.9 192.9,436.4 193.4,433.5 193.9,430.1 194.4,426.3 194.9,422.1 195.4,417.5 195.9,412.4 196.4,406.9 196.9,401.1 197.4,394.9 198.0,388.4 198.5,381.5 199.0,374.2 199.5,366.7 200.0,358.9 200.5,350.9 201.0,342.5 201.5,334.0 202.0,325.3 202.5,316.3 203.0,307.3 203.5,298.1 204.1,288.7 204.6,279.3 205.1,269.8 205.6,260.3 206.1,250.8 206.6,241.2 207.1,231.7 207.6,222.3 208.1,212.9 208.6,203.6 209.1,194.5 209.6,185.5 210.2,176.7 210.7,168.1 211.2,159.7 211.7,151.5 212.2,143.6 212.7,136.0 213.2,128.7 213.7,121.7 214.2,115.0 214.7,108.7 215.2,102.8 215.7,97.2 216.3,92.1 216.8,87.3 217.3,83.0 217.8,79.2 218.3,75.8 218.8,72.8 219.3,70.3 219.8,68.3 220.3,66.8 220.8,65.7 221.3,65.1 221.8,65.0 222.4,65.5 222.9,66.4 223.4,67.7 223.9,69.6 224.4,72.0 224.9,74.8 225.4,78.1 225.9,81.8 226.4,86.0 226.9,90.7 227.4,95.7 227.9,101.2 228.5,107.1 229.0,113.4 229.5,120.1 230.0,127.1 230.5,134.4 231.0,142.1 231.5,150.1 232.0,158.3 232.5,166.9 233.0,175.6 233.5,184.6 234.0,193.8 234.6,203.1 235.1,212.6 235.6,222.3 236.1,232.0 236.6,241.8 237.1,251.6 237.6,261.5 238.1,271.4 238.6,281.3 239.1,291.1 239.6,300.8 240.1,310.5 240.6,320.0 241.2,329.4 241.7,338.6 242.2,347.6 242.7,356.4 243.2,364.9 243.7,373.2 244.2,381.2 244.7,388.9 245.2,396.3 245.7,403.4 246.2,410.1 246.7,416.4 247.3,422.3 247.8,427.8 248.3,432.9 248.8,437.6 249.3,441.8 249.8,445.5 250.3,448.8 250.8,451.6 251.3,453.9 251.8,455.8 252.3,457.1 252.8,457.9 253.4,458.3 253.9,458.1 254.4,457.4 254.9,456.3 255.4,454.6 255.9,452.4 256.4,449.8 256.9,446.6 257.4,443.0 257.9,438.9 258.4,434.4 258.9,429.4 259.5,424.0 260.0,418.2 260.5,411.9 261.0,405.3 261.5,398.3 262.0,391.0 262.5,383.3 263.0,375.2 263.5,366.9 264.0,358.4 264.5,349.5 265.0,340.4 265.6,331.2 266.1,321.7 266.6,312.0 267.1,302.3 267.6,292.4 268.1,282.4 268.6,272.4 269.1,262.3 269.6,252.2 270.1,242.1 270.6,232.0 271.1,222.1 271.7,212.2 272.2,202.4 272.7,192.7 273.2,183.3 273.7,174.0 274.2,164.9 274.7,156.0 275.2,147.4 275.7,139.1 276.2,131.1 276.7,123.4 277.2,116.1 277.8,109.0 278.3,102.4 278.8,96.2 279.3,90.4 279.8,85.0 280.3,80.0 280.8,75.5 281.3,71.4 281.8,67.8 282.3,64.7 282.8,62.1 283.3,60.0 283.9,58.4 284.4,57.3 284.9,56.7 285.4,56.6 285.9,57.0 286.4,57.9 286.9,59.3 287.4,61.3 287.9,63.7 288.4,66.7 288.9,70.1 289.4,74.0 290.0,78.3 290.5,83.2 291.0,88.4 291.5,94.1 292.0,100.3 292.5,106.8 293.0,113.7 293.5,121.0 294.0,128.6 294.5,136.6 295.0,144.8 295.5,153.4 296.1,162.2 296.6,171.3 297.1,180.6 297.6,190.1 298.1,199.8 298.6,209.6 299.1,219.6 299.6,229.7 300.1,239.8 300.6,250.0 301.1,260.2 301.6,270.4 302.1,280.6 302.7,290.8 303.2,300.8 303.7,310.8 304.2,320.6 304.7,330.3 305.2,339.8 305.7,349.1 306.2,358.2 306.7,367.0 307.2,375.6 307.7,383.9 308.2,391.8 308.8,399.4 309.3,406.7 309.8,413.6 310.3,420.1 310.8,426.2 311.3,431.9 311.8,437.2 312.3,442.0 312.8,446.3 313.3,450.2 313.8,453.6 314.3,456.5 314.9,458.9 315.4,460.8 315.9,462.1 316.4,463.0 316.9,463.4 317.4,463.2 317.9,462.5 318.4,461.4 318.9,459.7 319.4,457.5 319.9,454.8 320.4,451.6 321.0,447.9 321.5,443.7 322.0,439.1 322.5,434.0 323.0,428.5 323.5,422.5 324.0,416.1 324.5,409.4 325.0,402.2 325.5,394.7 326.0,386.8 326.5,378.7 327.1,370.2 327.6,361.4 328.1,352.4 328.6,343.1 329.1,333.6 329.6,323.9 330.1,314.1 330.6,304.1 331.1,294.0 331.6,283.9 332.1,273.6 332.6,263.3 333.2,253.0 333.7,242.7 334.2,232.5 334.7,222.3 335.2,212.2 335.7,202.2 336.2,192.4 336.7,182.7 337.2,173.3 337.7,164.0 338.2,155.0 338.7,146.2 339.3,137.7 339.8,129.6 340.3,121.7 340.8,114.2 341.3,107.1 341.8,100.3 342.3,94.0 342.8,88.0 343.3,82.5 343.8,77.4 344.3,72.8 344.8,68.7 345.4,65.0 345.9,61.9 346.4,59.2 346.9,57.0 347.4,55.4 347.9,54.2 348.4,53.6 348.9,53.5 349.4,53.9 349.9,54.8 350.4,56.3 350.9,58.2 351.5,60.7 352.0,63.6 352.5,67.1 353.0,71.0 353.5,75.5 354.0,80.3 354.5,85.7 355.0,91.4 355.5,97.6 356.0,104.2 356.5,111.2 357.0,118.6 357.6,126.3 358.1,134.4 358.6,142.7 359.1,151.4 359.6,160.4 360.1,169.6 360.6,179.0 361.1,188.6 361.6,198.4 362.1,208.4 362.6,218.4 363.1,228.6 363.7,238.9 364.2,249.2 364.7,259.5 365.2,269.9 365.7,280.2 366.2,290.5 366.7,300.7 367.2,310.7 367.7,320.7 368.2,330.5 368.7,340.1 369.2,349.5 369.7,358.7 370.3,367.6 370.8,376.3 371.3,384.7 371.8,392.7 372.3,400.4 372.8,407.8 373.3,414.8 373.8,421.4 374.3,427.5 374.8,433.3 375.3,438.6 375.8,443.5 376.4,447.9 376.9,451.8 377.4,455.2 377.9,458.2 378.4,460.6 378.9,462.5 379.4,463.9 379.9,464.8 380.4,465.2 380.9,465.1 381.4,464.4 381.9,463.2 382.5,461.5 383.0,459.3 383.5,456.6 384.0,453.4 384.5,449.7 385.0,445.5 385.5,440.8 386.0,435.7 386.5,430.1 387.0,424.2 387.5,417.7 388.0,410.9 388.6,403.7 389.1,396.1 389.6,388.2 390.1,380.0 390.6,371.4 391.1,362.6 391.6,353.5 392.1,344.2 392.6,334.6 393.1,324.9 393.6,315.0 394.1,304.9 394.7,294.8 395.2,284.5 395.7,274.2 396.2,263.8 396.7,253.5 397.2,243.1 397.7,232.8 398.2,222.5 398.7,212.3 399.2,202.3 399.7,192.4 400.2,182.7 400.8,173.1 401.3,163.8 401.8,154.7 402.3,145.9 402.8,137.3 403.3,129.1 403.8,121.2 404.3,113.6 404.8,106.4 405.3,99.6 405.8,93.2 406.3,87.2 406.9,81.7 407.4,76.6 407.9,71.9 408.4,67.8 408.9,64.1 409.4,60.9 409.9,58.2 410.4,56.0 410.9,54.3 411.4,53.1 411.9,52.5 412.4,52.4 413.0,52.8 413.5,53.7 414.0,55.1 414.5,57.1 415.0,59.5 415.5,62.5 416.0,66.0 416.5,69.9 417.0,74.4 417.5,79.3 418.0,84.6 418.5,90.4 419.1,96.6 419.6,103.3 420.1,110.3 420.6,117.7 421.1,125.4 421.6,133.5 422.1,141.9 422.6,150.6 423.1,159.6 423.6,168.8 424.1,178.3 424.6,188.0 425.2,197.8 425.7,207.8 426.2,217.9 426.7,228.2 427.2,238.5 427.7,248.8 428.2,259.2 428.7,269.6 429.2,280.0 429.7,290.3 430.2,300.5 430.7,310.6 431.2,320.6 431.8,330.5 432.3,340.1 432.8,349.6 433.3,358.8 433.8,367.8 434.3,376.5 434.8,384.9 435.3,393.0 435.8,400.7 436.3,408.1 436.8,415.2 437.3,421.8 437.9,428.0 438.4,433.8 438.9,439.1 439.4,444.0 439.9,448.4 440.4,452.4 440.9,455.8 441.4,458.8 441.9,461.2 442.4,463.2 442.9,464.6 443.4,465.5 444.0,465.9 444.5,465.8 445.0,465.1 445.5,463.9 446.0,462.2 446.5,460.0 447.0,457.3 447.5,454.1 448.0,450.4 448.5,446.2 449.0,441.5 449.5,436.4 450.1,430.8 450.6,424.8 451.1,418.3 451.6,411.5 452.1,404.3 452.6,396.7 453.1,388.8 453.6,380.5 454.1,371.9 454.6,363.1 455.1,354.0 455.6,344.6 456.2,335.0 456.7,325.3 457.2,315.3 457.7,305.3 458.2,295.1 458.7,284.8 459.2,274.4 459.7,264.1 460.2,253.7 460.7,243.3 461.2,232.9 461.7,222.6 462.3,212.4 462.8,202.4 463.3,192.4 463.8,182.7 464.3,173.1 464.8,163.7 465.3,154.6 465.8,145.8 466.3,137.2 466.8,129.0 467.3,121.0 467.8,113.4 468.4,106.2 468.9,99.4 469.4,93.0 469.9,87.0 470.4,81.4 470.9,76.3 471.4,71.6 471.9,67.4 472.4,63.7 472.9,60.5 473.4,57.8 473.9,55.6 474.5,53.9 475.0,52.7 475.5,52.1 476.0,52.0 476.5,52.4 477.0,53.3 477.5,54.7 478.0,56.7 478.5,59.1 479.0,62.1 479.5,65.6 480.0,69.5 480.6,74.0 481.1,78.9 481.6,84.2 482.1,90.0 482.6,96.2 483.1,102.9 483.6,109.9 484.1,117.3 484.6,125.1 485.1,133.2 485.6,141.6 486.1,150.3 486.7,159.3 487.2,168.6 487.7,178.0 488.2,187.7 488.7,197.6 489.2,207.6 489.7,217.7 490.2,228.0 490.7,238.3 491.2,248.7 491.7,259.1 492.2,269.5 492.7,279.9 493.3,290.2 493.8,300.4 494.3,310.6 494.8,320.6 495.3,330.5 495.8,340.1 496.3,349.6 496.8,358.8 497.3,367.8 497.8,376.6 498.3,385.0 498.8,393.1 499.4,400.8 499.9,408.2 500.4,415.3 500.9,421.9 501.4,428.1 501.9,433.9 502.4,439.3 502.9,444.2 503.4,448.6 503.9,452.6 504.4,456.0 504.9,459.0 505.5,461.4 506.0,463.4 506.5,464.8 507.0,465.7 507.5,466.1 508.0,466.0 508.5,465.3 509.0,464.2 509.5,462.5 510.0,460.3 510.5,457.5 511.0,454.3 511.6,450.6 512.1,446.4 512.6,441.7 513.1,436.6 513.6,431.0 514.1,425.0 514.6,418.6 515.1,411.7 515.6,404.5 516.1,396.9 516.6,389.0 517.1,380.7 517.7,372.1 518.2,363.3 518.7,354.2 519.2,344.8 519.7,335.2 520.2,325.4 520.7,315.5 521.2,305.4 521.7,295.2 522.2,284.9 522.7,274.6 523.2,264.2 523.8,253.7 524.3,243.3 524.8,233.0 525.3,222.7 525.8,212.5 526.3,202.4 526.8,192.5 527.3,182.7 527.8,173.1 528.3,163.7 528.8,154.6 529.3,145.8 529.9,137.2 530.4,128.9 530.9,121.0 531.4,113.4 531.9,106.2 532.4,99.3 532.9,92.9 533.4,86.9 533.9,81.3 534.4,76.2 534.9,71.5 535.4,67.3 536.0,63.6 536.5,60.4 537.0,57.7 537.5,55.5 538.0,53.8 538.5,52.6 539.0,52.0 539.5,51.8 540.0,52.2 540.5,53.1 541.0,54.6 541.5,56.5 542.1,59.0 542.6,62.0 543.1,65.4 543.6,69.4 544.1,73.8 544.6,78.7 545.1,84.1 545.6,89.9 546.1,96.1 546.6,102.7 547.1,109.8 547.6,117.2 548.2,124.9 548.7,133.1 549.2,141.5 549.7,150.2 550.2,159.2 550.7,168.5 551.2,177.9 551.7,187.6 552.2,197.5 552.7,207.5 553.2,217.6 553.7,227.9 554.3,238.2 554.8,248.6 555.3,259.0 555.8,269.4 556.3,279.8 556.8,290.2 557.3,300.4 557.8,310.6 558.3,320.6 558.8,330.4 559.3,340.1 559.8,349.6 560.3,358.8 560.9,367.8 561.4,376.6 561.9,385.0 562.4,393.1 562.9,400.9 563.4,408.3 563.9,415.3 564.4,421.9 564.9,428.2 565.4,434.0 565.9,439.3 566.4,444.2 567.0,448.7 567.5,452.6 568.0,456.1 568.5,459.1 569.0,461.5 569.5,463.5 570.0,464.9 570.5,465.8 571.0,466.2 571.5,466.1 572.0,465.4 572.5,464.2 573.1,462.6 573.6,460.3 574.1,457.6 574.6,454.4 575.1,450.7 575.6,446.5 576.1,441.8 576.6,436.7 577.1,431.1 577.6,425.1 578.1,418.7 578.6,411.8 579.2,404.6 579.7,397.0 580.2,389.1 580.7,380.8 581.2,372.2 581.7,363.4 582.2,354.2 582.7,344.9 583.2,335.3 583.7,325.5 584.2,315.6 584.7,305.5 585.3,295.3 585.8,285.0 586.3,274.6 586.8,264.2 587.3,253.8 587.8,243.4 588.3,233.0 588.8,222.7 589.3,212.5 589.8,202.4 590.3,192.5 590.8,182.7 591.4,173.1 591.9,163.8 592.4,154.6 592.9,145.8 593.4,137.2 593.9,128.9 594.4,121.0 594.9,113.4 595.4,106.2 595.9,99.3 596.4,92.9 596.9,86.9 597.5,81.3 598.0,76.2 598.5,71.5 599.0,67.3 599.5,63.6 600.0,60.4 600.5,57.6 601.0,55.4 601.5,53.7 602.0,52.6 602.5,51.9 603.0,51.8 603.6,52.2 604.1,53.1 604.6,54.5 605.1,56.5 605.6,58.9 606.1,61.9 606.6,65.4 607.1,69.3 607.6,73.8 608.1,78.7 608.6,84.0 609.1,89.8 609.7,96.0 610.2,102.7 610.7,109.7 611.2,117.1 611.7,124.9 612.2,133.0 612.7,141.4 613.2,150.2 613.7,159.2 614.2,168.4 614.7,177.9 615.2,187.6 615.8,197.4 616.3,207.5 616.8,217.6 617.3,227.9 617.8,238.2 618.3,248.6 618.8,259.0 619.3,269.4 619.8,279.8 620.3,290.1 620.8,300.4 621.3,310.5 621.8,320.6 622.4,330.4 622.9,340.1 623.4,349.6 623.9,358.8 624.4,367.8 624.9,376.6 625.4,385.0 625.9,393.1 626.4,400.9 626.9,408.3 627.4,415.3 627.9,422.0 628.5,428.2 629.0,434.0 629.5,439.3 630.0,444.2 630.5,448.7 631.0,452.6 631.5,456.1 632.0,459.1 632.5,461.5 633.0,463.5 633.5,464.9 634.0,465.8 634.6,466.2 635.1,466.1 635.6,465.5 636.1,464.3 636.6,462.6 637.1,460.4 637.6,457.7 638.1,454.4 638.6,450.7 639.1,446.5 639.6,441.9 640.1,436.7 640.7,431.1 641.2,425.1 641.7,418.7 642.2,411.9 642.7,404.6 643.2,397.0 643.7,389.1 644.2,380.8 644.7,372.2 645.2,363.4 645.7,354.3 646.2,344.9 646.8,335.3 647.3,325.5 647.8,315.6 648.3,305.5 648.8,295.3 649.3,285.0 649.8,274.6 650.3,264.2 650.8,253.8 651.3,243.4 651.8,233.0 652.3,222.7 652.9,212.5 653.4,202.4 653.9,192.5 654.4,182.7 654.9,173.1 655.4,163.8 655.9,154.6 656.4,145.8 656.9,137.2 657.4,128.9 657.9,121.0 658.4,113.4 659.0,106.1 659.5,99.3 660.0,92.9 660.5,86.9 661.0,81.3 661.5,76.1 662.0,71.5 662.5,67.3 663.0,63.6 663.5,60.3 664.0,57.6 664.5,55.4 665.1,53.7 665.6,52.5 666.1,51.9 666.6,51.8 667.1,52.1 667.6,53.1 668.1,54.5 668.6,56.4 669.1,58.9 669.6,61.9 670.1,65.3 670.6,69.3 671.2,73.7 671.7,78.6 672.2,84.0 672.7,89.8 673.2,96.0 673.7,102.7 674.2,109.7 674.7,117.1 675.2,124.9 675.7,133.0 676.2,141.4 676.7,150.1 677.3,159.1 677.8,168.4 678.3,177.9 678.8,187.6 679.3,197.4 679.8,207.4 680.3,217.6 680.8,227.9 681.3,238.2 681.8,248.6 682.3,259.0" fill="none" stroke="#ff0000" stroke-width="2" stroke-linejoin="round"/>
<polyline points="47.0,259.0 47.5,248.5 48.0,238.3 48.5,228.2 49.0,218.4 49.5,208.8 50.0,199.5 50.6,190.5 51.1,181.8 51.6,173.4 52.1,165.4 52.6,157.7 53.1,150.4 53.6,143.5 54.1,137.0 54.6,130.9 55.1,125.2 55.6,119.9 56.1,115.1 56.7,110.7 57.2,106.8 57.7,103.2 58.2,100.2 58.7,97.5 59.2,95.4 59.7,93.6 60.2,92.3 60.7,91.5 61.2,91.0 61.7,91.0 62.2,91.5 62.8,92.3 63.3,93.5 63.8,95.2 64.3,97.2 64.8,99.6 65.3,102.3 65.8,105.5 66.3,108.9 66.8,112.7 67.3,116.7 67.8,121.1 68.3,125.7 68.9,130.6 69.4,135.8 69.9,141.2 70.4,146.8 70.9,152.5 71.4,158.5 71.9,164.6 72.4,170.9 72.9,177.3 73.4,183.8 73.9,190.3 74.4,197.0 75.0,203.7 75.5,210.4 76.0,217.2 76.5,223.9 77.0,230.7 77.5,237.4 78.0,244.0 78.5,250.6 79.0,257.1 79.5,263.5 80.0,269.8 80.5,276.0 81.1,282.1 81.6,287.9 82.1,293.7 82.6,299.2 83.1,304.6 83.6,309.7 84.1,314.7 84.6,319.4 85.1,324.0 85.6,328.3 86.1,332.3 86.6,336.1 87.2,339.7 87.7,342.9 88.2,346.0 88.7,348.7 89.2,351.2 89.7,353.5 90.2,355.4 90.7,357.1 91.2,358.5 91.7,359.7 92.2,360.6 92.7,361.2 93.3,361.5 93.8,361.6 94.3,361.4 94.8,361.0 95.3,360.3 95.8,359.4 96.3,358.2 96.8,356.8 97.3,355.2 97.8,353.4 98.3,351.3 98.8,349.1 99.4,346.7 99.9,344.1 100.4,341.3 100.9,338.3 101.4,335.2 101.9,332.0 102.4,328.6 102.9,325.1 103.4,321.5 103.9,317.8 104.4,314.0 104.9,310.1 105.5,306.1 106.0,302.1 106.5,298.1 107.0,294.0 107.5,289.9 108.0,285.7 108.5,281.6 109.0,277.5 109.5,273.4 110.0,269.3 110.5,265.2 111.0,261.2 111.5,257.3 112.1,253.4 112.6,249.6 113.1,245.9 113.6,242.2 114.1,238.7 114.6,235.2 115.1,231.9 115.6,228.7 116.1,225.6 116.6,222.7 117.1,219.9 117.6,217.2 118.2,214.7 118.7,212.3 119.2,210.1 119.7,208.0 120.2,206.1 120.7,204.3 121.2,202.7 121.7,201.3 122.2,200.1 122.7,199.0 123.2,198.1 123.7,197.3 124.3,196.7 124.8,196.3 125.3,196.0 125.8,195.9 126.3,196.0 126.8,196.2 127.3,196.6 127.8,197.1 128.3,197.8 128.8,198.6 129.3,199.5 129.8,200.6 130.4,201.8 130.9,203.2 131.4,204.6 131.9,206.2 132.4,207.9 132.9,209.7 133.4,211.6 133.9,213.5 134.4,215.6 134.9,217.7 135.4,219.9 135.9,222.2 136.5,224.5 137.0,226.9 137.5,229.3 138.0,231.8 138.5,234.3 139.0,236.8 139.5,239.4 140.0,241.9 140.5,244.5 141.0,247.0 141.5,249.6 142.0,252.1 142.6,254.6 143.1,257.1 143.6,259.5 144.1,261.9 144.6,264.3 145.1,266.6 145.6,268.9 146.1,271.1 146.6,273.2 147.1,275.3 147.6,277.3 148.1,279.3 148.7,281.1 149.2,282.9 149.7,284.6 150.2,286.1 150.7,287.6 151.2,289.1 151.7,290.4 152.2,291.6 152.7,292.7 153.2,293.7 153.7,294.6 154.2,295.4 154.8,296.1 155.3,296.7 155.8,297.2 156.3,297.6 156.8,297.9 157.3,298.1 157.8,298.2 158.3,298.2 158.8,298.1 159.3,297.9 159.8,297.6 160.3,297.2 160.9,296.7 161.4,296.1 161.9,295.5 162.4,294.7 162.9,293.9 163.4,293.0 163.9,292.1 164.4,291.0 164.9,289.9 165.4,288.8 165.9,287.6 166.4,286.3 167.0,285.0 167.5,283.6 168.0,282.2 168.5,280.8 169.0,279.3 169.5,277.8 170.0,276.3 170.5,274.7 171.0,273.1 171.5,271.5 172.0,270.0 172.5,268.4 173.1,266.8 173.6,265.2 174.1,263.6 174.6,262.0 175.1,260.4 175.6,258.9 176.1,257.4 176.6,255.9 177.1,254.4 177.6,253.0 178.1,251.6 178.6,250.3 179.1,248.9 179.7,247.7 180.2,246.4 180.7,245.3 181.2,244.1 181.7,243.1 182.2,242.1 182.7,241.1 183.2,240.2 183.7,239.4 184.2,238.6 184.7,237.9 185.2,237.2 185.8,236.6 186.3,236.1 186.8,235.6 187.3,235.2 187.8,234.9 188.3,234.7 188.8,234.5 189.3,234.3 189.8,234.2 190.3,234.2 190.8,234.3 191.3,234.4 191.9,234.6 192.4,234.8 192.9,235.1 193.4,235.5 193.9,235.9 194.4,236.3 194.9,236.8 195.4,237.4 195.9,238.0 196.4,238.6 196.9,239.3 197.4,240.0 198.0,240.8 198.5,241.6 199.0,242.4 199.5,243.3 200.0,244.2 200.5,245.1 201.0,246.0 201.5,247.0 202.0,248.0 202.5,248.9 203.0,249.9 203.5,251.0 204.1,252.0 204.6,253.0 205.1,254.0 205.6,255.0 206.1,256.0 206.6,257.0 207.1,258.0 207.6,259.0 208.1,260.0 208.6,261.0 209.1,261.9 209.6,262.8 210.2,263.7 210.7,264.6 211.2,265.4 211.7,266.3 212.2,267.1 212.7,267.8 213.2,268.5 213.7,269.2 214.2,269.9 214.7,270.5 215.2,271.1 215.7,271.7 216.3,272.2 216.8,272.6 217.3,273.1 217.8,273.4 218.3,273.8 218.8,274.1 219.3,274.4 219.8,274.6 220.3,274.7 220.8,274.9 221.3,275.0 221.8,275.0 222.4,275.0 222.9,275.0 223.4,274.9 223.9,274.8 224.4,274.7 224.9,274.5 225.4,274.3 225.9,274.0 226.4,273.7 226.9,273.4 227.4,273.0 227.9,272.7 228.5,272.2 229.0,271.8 229.5,271.3 230.0,270.8 230.5,270.3 231.0,269.8 231.5,269.2 232.0,268.6 232.5,268.0 233.0,267.4 233.5,266.8 234.0,266.2 234.6,265.5 235.1,264.9 235.6,264.2 236.1,263.5 236.6,262.9 237.1,262.2 237.6,261.5 238.1,260.8 238.6,260.2 239.1,259.5 239.6,258.9 240.1,258.2 240.6,257.6 241.2,257.0 241.7,256.4 242.2,255.8 242.7,255.2 243.2,254.6 243.7,254.1 244.2,253.6 244.7,253.1 245.2,252.6 245.7,252.1 246.2,251.7 246.7,251.3 247.3,250.9 247.8,250.5 248.3,250.2 248.8,249.8 249.3,249.6 249.8,249.3 250.3,249.1 250.8,248.9 251.3,248.7 251.8,248.5 252.3,248.4 252.8,248.3 253.4,248.3 253.9,248.2 254.4,248.2 254.9,248.3 255.4,248.3 255.9,248.4 256.4,248.5 256.9,248.6 257.4,248.8 257.9,248.9 258.4,249.1 258.9,249.3 259.5,249.6 260.0,249.8 260.5,250.1 261.0,250.4 261.5,250.8 262.0,251.1 262.5,251.4 263.0,251.8 263.5,252.2 264.0,252.6 264.5,253.0 265.0,253.4 265.6,253.8 266.1,254.3 266.6,254.7 267.1,255.2 267.6,255.6 268.1,256.1 268.6,256.5 269.1,257.0 269.6,257.5 270.1,257.9 270.6,258.4 271.1,258.8 271.7,259.3 272.2,259.7 272.7,260.1 273.2,260.6 273.7,261.0 274.2,261.4 274.7,261.8 275.2,262.2 275.7,262.6 276.2,262.9 276.7,263.3 277.2,263.6 277.8,263.9 278.3,264.2 278.8,264.5 279.3,264.8 279.8,265.0 280.3,265.3 280.8,265.5 281.3,265.7 281.8,265.9 282.3,266.0 282.8,266.2 283.3,266.3 283.9,266.4 284.4,266.5 284.9,266.5 285.4,266.5 285.9,266.6 286.4,266.6 286.9,266.6 287.4,266.5 287.9,266.5 288.4,266.4 288.9,266.3 289.4,266.2 290.0,266.1 290.5,265.9 291.0,265.8 291.5,265.6 292.0,265.4 292.5,265.2 293.0,265.0 293.5,264.7 294.0,264.5 294.5,264.2 295.0,264.0 295.5,263.7 296.1,263.4 296.6,263.1 297.1,262.8 297.6,262.5 298.1,262.2 298.6,261.9 299.1,261.5 299.6,261.2 300.1,260.9 300.6,260.6 301.1,260.2 301.6,259.9 302.1,259.6 302.7,259.2 303.2,258.9 303.7,258.6 304.2,258.3 304.7,257.9 305.2,257.6 305.7,257.3 306.2,257.0 306.7,256.7 307.2,256.5 307.7,256.2 308.2,255.9 308.8,255.7 309.3,255.4 309.8,255.2 310.3,255.0 310.8,254.8 311.3,254.6 311.8,254.4 312.3,254.3 312.8,254.1 313.3,254.0 313.8,253.8 314.3,253.7 314.9,253.6 315.4,253.5 315.9,253.5 316.4,253.4 316.9,253.4 317.4,253.4 317.9,253.4 318.4,253.4 318.9,253.4 319.4,253.4 319.9,253.5 320.4,253.5 321.0,253.6 321.5,253.7 322.0,253.8 322.5,253.9 323.0,254.0 323.5,254.2 324.0,254.3 324.5,254.5 325.0,254.6 325.5,254.8 326.0,255.0 326.5,255.2 327.1,255.4 327.6,255.6 328.1,255.9 328.6,256.1 329.1,256.3 329.6,256.6 330.1,256.8 330.6,257.0 331.1,257.3 331.6,257.5 332.1,257.8 332.6,258.0 333.2,258.3 333.7,258.6 334.2,258.8 334.7,259.1 335.2,259.3 335.7,259.6 336.2,259.8 336.7,260.0 337.2,260.3 337.7,260.5 338.2,260.7 338.7,261.0 339.3,261.2 339.8,261.4 340.3,261.6 340.8,261.8 341.3,262.0 341.8,262.1 342.3,262.3 342.8,262.4 343.3,262.6 343.8,262.7 344.3,262.8 344.8,263.0 345.4,263.1 345.9,263.2 346.4,263.2 346.9,263.3 347.4,263.4 347.9,263.4 348.4,263.4 348.9,263.5 349.4,263.5 349.9,263.5 350.4,263.5 350.9,263.4 351.5,263.4 352.0,263.4 352.5,263.3 353.0,263.2 353.5,263.2 354.0,263.1 354.5,263.0 355.0,262.9 355.5,262.7 356.0,262.6 356.5,262.5 357.0,262.3 357.6,262.2 358.1,262.0 358.6,261.9 359.1,261.7 359.6,261.5 360.1,261.3 360.6,261.2 361.1,261.0 361.6,260.8 362.1,260.6 362.6,260.4 363.1,260.2 363.7,260.0 364.2,259.8 364.7,259.5 365.2,259.3 365.7,259.1 366.2,258.9 366.7,258.7 367.2,258.5 367.7,258.3 368.2,258.1 368.7,257.9 369.2,257.7 369.7,257.5 370.3,257.4 370.8,257.2 371.3,257.0 371.8,256.8 372.3,256.7 372.8,256.5 373.3,256.4 373.8,256.2 374.3,256.1 374.8,256.0 375.3,255.9 375.8,255.8 376.4,255.7 376.9,255.6 377.4,255.5 377.9,255.4 378.4,255.4 378.9,255.3 379.4,255.3 379.9,255.3 380.4,255.2 380.9,255.2 381.4,255.2 381.9,255.2 382.5,255.3 383.0,255.3 383.5,255.3 384.0,255.4 384.5,255.4 385.0,255.5 385.5,255.6 386.0,255.6 386.5,255.7 387.0,255.8 387.5,255.9 388.0,256.0 388.6,256.2 389.1,256.3 389.6,256.4 390.1,256.6 390.6,256.7 391.1,256.9 391.6,257.0 392.1,257.2 392.6,257.3 393.1,257.5 393.6,257.7 394.1,257.8 394.7,258.0 395.2,258.2 395.7,258.4 396.2,258.6 396.7,258.7 397.2,258.9 397.7,259.1 398.2,259.3 398.7,259.4 399.2,259.6 399.7,259.8 400.2,260.0 400.8,260.1 401.3,260.3 401.8,260.5 402.3,260.6 402.8,260.8 403.3,260.9 403.8,261.0 404.3,261.2 404.8,261.3 405.3,261.4 405.8,261.5 406.3,261.7 406.9,261.8 407.4,261.9 407.9,261.9 408.4,262.0 408.9,262.1 409.4,262.2 409.9,262.2 410.4,262.3 410.9,262.3 411.4,262.3 411.9,262.3 412.4,262.3 413.0,262.4 413.5,262.3 414.0,262.3 414.5,262.3 415.0,262.3 415.5,262.2 416.0,262.2 416.5,262.1 417.0,262.1 417.5,262.0 418.0,261.9 418.5,261.8 419.1,261.7 419.6,261.6 420.1,261.5 420.6,261.4 421.1,261.3 421.6,261.2 422.1,261.1 422.6,260.9 423.1,260.8 423.6,260.6 424.1,260.5 424.6,260.3 425.2,260.2 425.7,260.0 426.2,259.9 426.7,259.7 427.2,259.6 427.7,259.4 428.2,259.2 428.7,259.1 429.2,258.9 429.7,258.7 430.2,258.6 430.7,258.4 431.2,258.3 431.8,258.1 432.3,258.0 432.8,257.8 433.3,257.7 433.8,257.5 434.3,257.4 434.8,257.2 435.3,257.1 435.8,257.0 436.3,256.9 436.8,256.8 437.3,256.7 437.9,256.6 438.4,256.5 438.9,256.4 439.4,256.3 439.9,256.2 440.4,256.2 440.9,256.1 441.4,256.0 441.9,256.0 442.4,256.0 442.9,255.9 443.4,255.9 444.0,255.9 444.5,255.9 445.0,255.9 445.5,255.9 446.0,255.9 446.5,256.0 447.0,256.0 447.5,256.0 448.0,256.1 448.5,256.1 449.0,256.2 449.5,256.3 450.1,256.4 450.6,256.4 451.1,256.5 451.6,256.6 452.1,256.7 452.6,256.8 453.1,257.0 453.6,257.1 454.1,257.2 454.6,257.3 455.1,257.5 455.6,257.6 456.2,257.7 456.7,257.9 457.2,258.0 457.7,258.2 458.2,258.3 458.7,258.5 459.2,258.6 459.7,258.8 460.2,258.9 460.7,259.1 461.2,259.2 461.7,259.4 462.3,259.5 462.8,259.7 463.3,259.8 463.8,260.0 464.3,260.1 464.8,260.3 465.3,260.4 465.8,260.5 466.3,260.6 466.8,260.8 467.3,260.9 467.8,261.0 468.4,261.1 468.9,261.2 469.4,261.3 469.9,261.4 470.4,261.5 470.9,261.6 471.4,261.6 471.9,261.7 472.4,261.8 472.9,261.8 473.4,261.8 473.9,261.9 474.5,261.9 475.0,261.9 475.5,261.9 476.0,261.9 476.5,261.9 477.0,261.9 477.5,261.9 478.0,261.9 478.5,261.9 479.0,261.8 479.5,261.8 480.0,261.7 480.6,261.7 481.1,261.6 481.6,261.5 482.1,261.4 482.6,261.4 483.1,261.3 483.6,261.2 484.1,261.1 484.6,261.0 485.1,260.9 485.6,260.7 486.1,260.6 486.7,260.5 487.2,260.4 487.7,260.2 488.2,260.1 488.7,260.0 489.2,259.8 489.7,259.7 490.2,259.5 490.7,259.4 491.2,259.2 491.7,259.1 492.2,258.9 492.7,258.8 493.3,258.6 493.8,258.5 494.3,258.4 494.8,258.2 495.3,258.1 495.8,257.9 496.3,257.8 496.8,257.7 497.3,257.6 497.8,257.4 498.3,257.3 498.8,257.2 499.4,257.1 499.9,257.0 500.4,256.9 500.9,256.8 501.4,256.7 501.9,256.6 502.4,256.5 502.9,256.5 503.4,256.4 503.9,256.3 504.4,256.3 504.9,256.3 505.5,256.2 506.0,256.2 506.5,256.2 507.0,256.1 507.5,256.1 508.0,256.1 508.5,256.1 509.0,256.2 509.5,256.2 510.0,256.2 510.5,256.2 511.0,256.3 511.6,256.3 512.1,256.4 512.6,256.5 513.1,256.5 513.6,256.6 514.1,256.7 514.6,256.8 515.1,256.9 515.6,257.0 516.1,257.1 516.6,257.2 517.1,257.3 517.7,257.4 518.2,257.5 518.7,257.6 519.2,257.8 519.7,257.9 520.2,258.0 520.7,258.2 521.2,258.3 521.7,258.5 522.2,258.6 522.7,258.7 523.2,258.9 523.8,259.0 524.3,259.2 524.8,259.3 525.3,259.4 525.8,259.6 526.3,259.7 526.8,259.9 527.3,260.0 527.8,260.1 528.3,260.3 528.8,260.4 529.3,260.5 529.9,260.6 530.4,260.7 530.9,260.8 531.4,260.9 531.9,261.0 532.4,261.1 532.9,261.2 533.4,261.3 533.9,261.4 534.4,261.5 534.9,261.5 535.4,261.6 536.0,261.6 536.5,261.7 537.0,261.7 537.5,261.8 538.0,261.8 538.5,261.8 539.0,261.8 539.5,261.8 540.0,261.8 540.5,261.8 541.0,261.8 541.5,261.7 542.1,261.7 542.6,261.7 543.1,261.6 543.6,261.6 544.1,261.5 544.6,261.5 545.1,261.4 545.6,261.3 546.1,261.2 546.6,261.1 547.1,261.0 547.6,260.9 548.2,260.8 548.7,260.7 549.2,260.6 549.7,260.5 550.2,260.4 550.7,260.2 551.2,260.1 551.7,260.0 552.2,259.9 552.7,259.7 553.2,259.6 553.7,259.4 554.3,259.3 554.8,259.2 555.3,259.0 555.8,258.9 556.3,258.7 556.8,258.6 557.3,258.5 557.8,258.3 558.3,258.2 558.8,258.1 559.3,257.9 559.8,257.8 560.3,257.7 560.9,257.6 561.4,257.4 561.9,257.3 562.4,257.2 562.9,257.1 563.4,257.0 563.9,256.9 564.4,256.8 564.9,256.7 565.4,256.7 565.9,256.6 566.4,256.5 567.0,256.5 567.5,256.4 568.0,256.4 568.5,256.3 569.0,256.3 569.5,256.3 570.0,256.2 570.5,256.2 571.0,256.2 571.5,256.2 572.0,256.2 572.5,256.3 573.1,256.3 573.6,256.3 574.1,256.3 574.6,256.4 575.1,256.4 575.6,256.5 576.1,256.5 576.6,256.6 577.1,256.7 577.6,256.8 578.1,256.9 578.6,256.9 579.2,257.0 579.7,257.1 580.2,257.3 580.7,257.4 581.2,257.5 581.7,257.6 582.2,257.7 582.7,257.8 583.2,258.0 583.7,258.1 584.2,258.2 584.7,258.4 585.3,258.5 585.8,258.6 586.3,258.8 586.8,258.9 587.3,259.1 587.8,259.2 588.3,259.3 588.8,259.5 589.3,259.6 589.8,259.7 590.3,259.9 590.8,260.0 591.4,260.1 591.9,260.3 592.4,260.4 592.9,260.5 593.4,260.6 593.9,260.7 594.4,260.8 594.9,260.9 595.4,261.0 595.9,261.1 596.4,261.2 596.9,261.3 597.5,261.4 598.0,261.4 598.5,261.5 599.0,261.6 599.5,261.6 600.0,261.6 600.5,261.7 601.0,261.7 601.5,261.7 602.0,261.7 602.5,261.8 603.0,261.8 603.6,261.8 604.1,261.7 604.6,261.7 605.1,261.7 605.6,261.7 606.1,261.6 606.6,261.6 607.1,261.5 607.6,261.5 608.1,261.4 608.6,261.3 609.1,261.2 609.7,261.2 610.2,261.1 610.7,261.0 611.2,260.9 611.7,260.8 612.2,260.7 612.7,260.6 613.2,260.4 613.7,260.3 614.2,260.2 614.7,260.1 615.2,259.9 615.8,259.8 616.3,259.7 616.8,259.5 617.3,259.4 617.8,259.3 618.3,259.1 618.8,259.0 619.3,258.9 619.8,258.7 620.3,258.6 620.8,258.4 621.3,258.3 621.8,258.2 622.4,258.1 622.9,257.9 623.4,257.8 623.9,257.7 624.4,257.6 624.9,257.4 625.4,257.3 625.9,257.2 626.4,257.1 626.9,257.0 627.4,256.9 627.9,256.8 628.5,256.8 629.0,256.7 629.5,256.6 630.0,256.5 630.5,256.5 631.0,256.4 631.5,256.4 632.0,256.3 632.5,256.3 633.0,256.3 633.5,256.3 634.0,256.3 634.6,256.3 635.1,256.3 635.6,256.3 636.1,256.3 636.6,256.3 637.1,256.3 637.6,256.4 638.1,256.4 638.6,256.5 639.1,256.5 639.6,256.6 640.1,256.6 640.7,256.7 641.2,256.8 641.7,256.9 642.2,257.0 642.7,257.1 643.2,257.2 643.7,257.3 644.2,257.4 644.7,257.5 645.2,257.6 645.7,257.7 646.2,257.9 646.8,258.0 647.3,258.1 647.8,258.3 648.3,258.4 648.8,258.5 649.3,258.7 649.8,258.8 650.3,258.9 650.8,259.1 651.3,259.2 651.8,259.4 652.3,259.5 652.9,259.6 653.4,259.8 653.9,259.9 654.4,260.0 654.9,260.1 655.4,260.3 655.9,260.4 656.4,260.5 656.9,260.6 657.4,260.7 657.9,260.8 658.4,260.9 659.0,261.0 659.5,261.1 660.0,261.2 660.5,261.3 661.0,261.4 661.5,261.4 662.0,261.5 662.5,261.5 663.0,261.6 663.5,261.6 664.0,261.7 664.5,261.7 665.1,261.7 665.6,261.7 666.1,261.7 666.6,261.7 667.1,261.7 667.6,261.7 668.1,261.7 668.6,261.7 669.1,261.6 669.6,261.6 670.1,261.6 670.6,261.5 671.2,261.4 671.7,261.4 672.2,261.3 672.7,261.2 673.2,261.1 673.7,261.1 674.2,261.0 674.7,260.9 675.2,260.8 675.7,260.7 676.2,260.5 676.7,260.4 677.3,260.3 677.8,260.2 678.3,260.1 678.8,259.9 679.3,259.8 679.8,259.7 680.3,259.5 680.8,259.4 681.3,259.3 681.8,259.1 682.3,259.0 682.8,269.3 683.3,279.5 683.9,289.4 684.4,299.1 684.9,308.5 685.4,317.7 685.9,326.6 686.4,335.2 686.9,343.4 687.4,351.3 687.9,358.8 688.4,366.0 688.9,372.8 689.4,379.2 690.0,385.2 690.5,390.8 691.0,396.0 691.5,400.7 692.0,405.0 692.5,408.9 693.0,412.4 693.5,415.4 694.0,417.9 694.5,420.1 695.0,421.8 695.5,423.0 696.1,423.8 696.6,424.2 697.1,424.2 697.6,423.8 698.1,422.9 698.6,421.7 699.1,420.1 699.6,418.1 700.1,415.7 700.6,413.0 701.1,409.9 701.6,406.5 702.2,402.8 702.7,398.8 703.2,394.5 703.7,389.9 704.2,385.0 704.7,380.0 705.2,374.7 705.7,369.2 706.2,363.5 706.7,357.6 707.2,351.6 707.7,345.5 708.3,339.2 708.8,332.8 709.3,326.4 709.8,319.8 710.3,313.3 710.8,306.6 711.3,300.0 711.8,293.4 712.3,286.8 712.8,280.2 713.3,273.7 713.8,267.3 714.4,260.9 714.9,254.6 715.4,248.5 715.9,242.4 716.4,236.5 716.9,230.8 717.4,225.2 717.9,219.7 718.4,214.5 718.9,209.5 719.4,204.6 719.9,200.0 720.5,195.6 721.0,191.4 721.5,187.5 722.0,183.8 722.5,180.3 723.0,177.1 723.5,174.2 724.0,171.5 724.5,169.1 725.0,166.9 725.5,165.0 726.0,163.4 726.6,162.0 727.1,160.9 727.6,160.1 728.1,159.5 728.6,159.2 729.1,159.1 729.6,159.3 730.1,159.8 730.6,160.4 731.1,161.4 731.6,162.5 732.1,163.9 732.7,165.5 733.2,167.2 733.7,169.2 734.2,171.4 734.7,173.8 735.2,176.4 735.7,179.1 736.2,181.9 736.7,185.0 737.2,188.1 737.7,191.4 738.2,194.8 738.8,198.3 739.3,201.9 739.8,205.6 740.3,209.4 740.8,213.2 741.3,217.1 741.8,221.1 742.3,225.0 742.8,229.0 743.3,233.0 743.8,237.0 744.3,241.0 744.9,245.0 745.4,248.9 745.9,252.8 746.4,256.7 746.9,260.5 747.4,264.3 747.9,267.9 748.4,271.5 748.9,275.0 749.4,278.4 749.9,281.7 750.4,284.9 750.9,288.0 751.5,291.0 752.0,293.8 752.5,296.5 753.0,299.1 753.5,301.5 754.0,303.8 754.5,305.9 755.0,307.9 755.5,309.7 756.0,311.4 756.5,312.9 757.0,314.3 757.6,315.5 758.1,316.5 758.6,317.4 759.1,318.1 759.6,318.6 760.1,319.0 760.6,319.3 761.1,319.3 761.6,319.3 762.1,319.1 762.6,318.7 763.1,318.2 763.7,317.5 764.2,316.7 764.7,315.8 765.2,314.8 765.7,313.6 766.2,312.3 766.7,310.9 767.2,309.4 767.7,307.8 768.2,306.1 768.7,304.3 769.2,302.4 769.8,300.4 770.3,298.4 770.8,296.3 771.3,294.1 771.8,291.9 772.3,289.7 772.8,287.3 773.3,285.0 773.8,282.6 774.3,280.2 774.8,277.8 775.3,275.4 775.9,273.0 776.4,270.6 776.9,268.2 777.4,265.8 777.9,263.4 778.4,261.1 778.9,258.8 779.4,256.5 779.9,254.3 780.4,252.1 780.9,249.9 781.4,247.9 782.0,245.8 782.5,243.9 783.0,242.0 783.5,240.2 784.0,238.5 784.5,236.8 785.0,235.2 785.5,233.7 786.0,232.3 786.5,231.0 787.0,229.8 787.5,228.7 788.1,227.6 788.6,226.7 789.1,225.8 789.6,225.1 790.1,224.4 790.6,223.9 791.1,223.4 791.6,223.1 792.1,222.8 792.6,222.6 793.1,222.5 793.6,222.6 794.2,222.7 794.7,222.9 795.2,223.1 795.7,223.5 796.2,224.0 796.7,224.5 797.2,225.1 797.7,225.8 798.2,226.5 798.7,227.4 799.2,228.3 799.7,229.2 800.3,230.2 800.8,231.3 801.3,232.4 801.8,233.6 802.3,234.8 802.8,236.1 803.3,237.4 803.8,238.7 804.3,240.1 804.8,241.5 805.3,242.9 805.8,244.3 806.4,245.7 806.9,247.2 807.4,248.6 807.9,250.1 808.4,251.6 808.9,253.0 809.4,254.5 809.9,255.9 810.4,257.3 810.9,258.7 811.4,260.1 811.9,261.5 812.4,262.8 813.0,264.1 813.5,265.4 814.0,266.6 814.5,267.8 815.0,268.9 815.5,270.0 816.0,271.1 816.5,272.1 817.0,273.1 817.5,274.0 818.0,274.9 818.5,275.7 819.1,276.4 819.6,277.1 820.1,277.8 820.6,278.4 821.1,278.9 821.6,279.4 822.1,279.8 822.6,280.1 823.1,280.4 823.6,280.7 824.1,280.8 824.6,281.0 825.2,281.0 825.7,281.0 826.2,281.0 826.7,280.9 827.2,280.7 827.7,280.5 828.2,280.3 828.7,280.0 829.2,279.6 829.7,279.2 830.2,278.8 830.7,278.3 831.3,277.7 831.8,277.2 832.3,276.6 832.8,275.9 833.3,275.3 833.8,274.6 834.3,273.8 834.8,273.1 835.3,272.3 835.8,271.5 836.3,270.7 836.8,269.9 837.4,269.0 837.9,268.1 838.4,267.3 838.9,266.4 839.4,265.5 839.9,264.6 840.4,263.8 840.9,262.9 841.4,262.0 841.9,261.1 842.4,260.3 842.9,259.4 843.5,258.6 844.0,257.8 844.5,256.9 845.0,256.2 845.5,255.4 846.0,254.6 846.5,253.9 847.0,253.2 847.5,252.5 848.0,251.9 848.5,251.3 849.0,250.7 849.6,250.1 850.1,249.6 850.6,249.1 851.1,248.6 851.6,248.2 852.1,247.8 852.6,247.4 853.1,247.1 853.6,246.8 854.1,246.5 854.6,246.3 855.1,246.1 855.7,246.0 856.2,245.8 856.7,245.8 857.2,245.7 857.7,245.7 858.2,245.7 858.7,245.8 859.2,245.8 859.7,246.0 860.2,246.1 860.7,246.3 861.2,246.5 861.8,246.7 862.3,247.0 862.8,247.3 863.3,247.6 863.8,247.9 864.3,248.3 864.8,248.7 865.3,249.1 865.8,249.5 866.3,249.9 866.8,250.4 867.3,250.8 867.9,251.3 868.4,251.8 868.9,252.3 869.4,252.8 869.9,253.3 870.4,253.8 870.9,254.4 871.4,254.9 871.9,255.4 872.4,256.0 872.9,256.5 873.4,257.0 873.9,257.6 874.5,258.1 875.0,258.6 875.5,259.1 876.0,259.6 876.5,260.1 877.0,260.6 877.5,261.0 878.0,261.5 878.5,261.9 879.0,262.4 879.5,262.8 880.0,263.2 880.6,263.6 881.1,263.9 881.6,264.3 882.1,264.6 882.6,264.9 883.1,265.2 883.6,265.5 884.1,265.7 884.6,265.9 885.1,266.1 885.6,266.3 886.1,266.5 886.7,266.6 887.2,266.8 887.7,266.9 888.2,266.9 888.7,267.0 889.2,267.0 889.7,267.0 890.2,267.0 890.7,267.0 891.2,267.0 891.7,266.9 892.2,266.8 892.8,266.7 893.3,266.6 893.8,266.5 894.3,266.3 894.8,266.1 895.3,266.0 895.8,265.8 896.3,265.5 896.8,265.3 897.3,265.1 897.8,264.8 898.3,264.6 898.9,264.3 899.4,264.0 899.9,263.7 900.4,263.4 900.9,263.1 901.4,262.8 901.9,262.5 902.4,262.2 902.9,261.9 903.4,261.6 903.9,261.3 904.4,260.9 905.0,260.6 905.5,260.3 906.0,260.0 906.5,259.7 907.0,259.3 907.5,259.0 908.0,258.7 908.5,258.4 909.0,258.1 909.5,257.8 910.0,257.6 910.5,257.3 911.1,257.0 911.6,256.8 912.1,256.5 912.6,256.3 913.1,256.1 913.6,255.9 914.1,255.7 914.6,255.5 915.1,255.3 915.6,255.1 916.1,255.0 916.6,254.8 917.2,254.7 917.7,254.6 918.2,254.5 918.7,254.4 919.2,254.3 919.7,254.3 920.2,254.2 920.7,254.2 921.2,254.2 921.7,254.1 922.2,254.1 922.7,254.2 923.3,254.2 923.8,254.2 924.3,254.3 924.8,254.3 925.3,254.4 925.8,254.5 926.3,254.6 926.8,254.7 927.3,254.8 927.8,254.9 928.3,255.0 928.8,255.1 929.4,255.3 929.9,255.4 930.4,255.6 930.9,255.7 931.4,255.9 931.9,256.1 932.4,256.3 932.9,256.4 933.4,256.6 933.9,256.8 934.4,257.0 934.9,257.2 935.5,257.4 936.0,257.6 936.5,257.8 937.0,258.0 937.5,258.2 938.0,258.4 938.5,258.5 939.0,258.7 939.5,258.9 940.0,259.1 940.5,259.3 941.0,259.5 941.5,259.6 942.1,259.8 942.6,260.0 943.1,260.1 943.6,260.3 944.1,260.4 944.6,260.6 945.1,260.7 945.6,260.9 946.1,261.0 946.6,261.1 947.1,261.2 947.6,261.3 948.2,261.4 948.7,261.5 949.2,261.6 949.7,261.6 950.2,261.7 950.7,261.8 951.2,261.8 951.7,261.8 952.2,261.9 952.7,261.9 953.2,261.9 953.7,261.9 954.3,261.9 954.8,261.9 955.3,261.9 955.8,261.9 956.3,261.9 956.8,261.8 957.3,261.8 957.8,261.8 958.3,261.7 958.8,261.6 959.3,261.6 959.8,261.5 960.4,261.4 960.9,261.4 961.4,261.3 961.9,261.2 962.4,261.1 962.9,261.0 963.4,260.9 963.9,260.8 964.4,260.7 964.9,260.6 965.4,260.5 965.9,260.4 966.5,260.2 967.0,260.1 967.5,260.0 968.0,259.9 968.5,259.8 969.0,259.7 969.5,259.5 970.0,259.4 970.5,259.3 971.0,259.2 971.5,259.1 972.0,259.0 972.6,258.9 973.1,258.7 973.6,258.6 974.1,258.5 974.6,258.4 975.1,258.3 975.6,258.2 976.1,258.2 976.6,258.1 977.1,258.0 977.6,257.9 978.1,257.8 978.7,257.8 979.2,257.7 979.7,257.6 980.2,257.6 980.7,257.5 981.2,257.5 981.7,257.4 982.2,257.4 982.7,257.3 983.2,257.3 983.7,257.3 984.2,257.3 984.8,257.2 985.3,257.2 985.8,257.2 986.3,257.2 986.8,257.2 987.3,257.2 987.8,257.2 988.3,257.3 988.8,257.3 989.3,257.3 989.8,257.3 990.3,257.4 990.9,257.4 991.4,257.4 991.9,257.5 992.4,257.5 992.9,257.6 993.4,257.6 993.9,257.7 994.4,257.7 994.9,257.8 995.4,257.8 995.9,257.9 996.4,258.0 997.0,258.0 997.5,258.1 998.0,258.2 998.5,258.2 999.0,258.3 999.5,258.4" fill="none" stroke="#0000ff" stroke-width="2" stroke-linejoin="round"/></svg>
<div class="yl" style="top:42px">10V</div>
<div class="yl" style="top:84px">8V</div>
<div class="yl" style="top:126px">6V</div>
<div class="yl" style="top:168px">4V</div>
<div class="yl" style="top:210px">2V</div>
<div class="yl" style="top:252px">0V</div>
<div class="yl" style="top:294px">-2V</div>
<div class="yl" style="top:336px">-4V</div>
<div class="yl" style="top:378px">-6V</div>
<div class="yl" style="top:420px">-8V</div>
<div class="yl" style="top:462px">-10V</div>
<div class="xl" style="left:7px">0.0µs</div>
<div class="xl" style="left:134px">0.2µs</div>
<div class="xl" style="left:261px">0.4µs</div>
<div class="xl" style="left:388px">0.6µs</div>
<div class="xl" style="left:515px">0.8µs</div>
<div class="xl" style="left:642px">1.0µs</div>
<div class="xl" style="left:769px">1.2µs</div>
<div class="xl" style="left:896px">1.4µs</div>
<div class="leg" style="left:167px;color:#00ff00">V(u_gen1)</div>
<div class="leg" style="left:433px;color:#ff0000">V(u_knotenp)-V(u_gen1)</div>
<div class="leg" style="left:790px;color:#0000ff">V(u_knotenp)</div>
<!-- separator -->
<div class="abs" id="sep1"></div>
<div class="abs" id="sep2"></div>
<div class="abs" id="sep3"></div>
<!-- bottom window -->
<div class="abs" id="t2"></div>
<div class="abs" id="t2f"></div>
<div class="abs" id="schw"></div>
<div class="abs" id="schsh"></div>
<div class="abs" id="schsh2"></div>
<div class="abs" id="schsh3"></div>
<div class="abs" id="sch"></div>
<svg class="abs" style="left:0;top:512px" width="24" height="28" shape-rendering="crispEdges" fill="#0000ff"><rect x="6" y="15" width="3" height="1"/><rect x="9" y="11" width="2" height="9"/><rect x="11" y="11" width="1" height="1"/><rect x="12" y="10" width="1" height="1"/><rect x="13" y="9" width="1" height="1"/><rect x="14" y="8" width="1" height="1"/><rect x="15" y="8" width="1" height="1"/><rect x="11" y="18" width="1" height="1"/><rect x="12" y="19" width="1" height="1"/><rect x="13" y="20" width="1" height="1"/><rect x="14" y="21" width="1" height="1"/><rect x="15" y="22" width="1" height="1"/><rect x="16" y="23" width="1" height="1"/><rect x="12" y="21" width="2" height="1"/><rect x="13" y="22" width="2" height="1"/><rect x="14" y="20" width="1" height="3"/></svg>
<div class="abs ttl" style="left:24px;top:521px;color:#1a1a2a">Saugkreis_4.asc</div>
<div class="btn2" style="left:922px;top:520px"></div>
<div class="btn2" style="left:955px;top:520px"></div>
<div class="btnc" style="left:988px;top:520px"></div>
<svg class="abs" style="left:920px;top:512px" width="103" height="28">
<rect x="12.5" y="16.5" width="10" height="4" rx="1.5" fill="#f4f4f4" stroke="#353b48"/>
<rect x="45.5" y="12.5" width="10" height="8" rx="1.5" fill="#f4f4f4" stroke="#353b48"/>
<rect x="48.5" y="15.5" width="4" height="2" fill="#8aa4c4" stroke="#353b48" stroke-width="0.8"/>
<path d="M80.5 14.2 L87 18.8 M87 14.2 L80.5 18.8" stroke="#353b48" stroke-width="4.4" stroke-linecap="round"/>
<path d="M80.5 14.2 L87 18.8 M87 14.2 L80.5 18.8" stroke="#ffffff" stroke-width="2.4" stroke-linecap="round"/>
</svg>
<svg class="abs" width="1023" height="861" style="left:0;top:0" shape-rendering="crispEdges"><path fill="#000" d="M17 545h1v1h-1zM31 545h1v1h-1zM46 545h1v1h-1zM61 545h1v1h-1zM75 545h1v1h-1zM90 545h1v1h-1zM104 545h1v1h-1zM119 545h1v1h-1zM134 545h1v1h-1zM148 545h1v1h-1zM163 545h1v1h-1zM177 545h1v1h-1zM192 545h1v1h-1zM207 545h1v1h-1zM221 545h1v1h-1zM236 545h1v1h-1zM250 545h1v1h-1zM265 545h1v1h-1zM280 545h1v1h-1zM294 545h1v1h-1zM309 545h1v1h-1zM323 545h1v1h-1zM338 545h1v1h-1zM353 545h1v1h-1zM367 545h1v1h-1zM382 545h1v1h-1zM396 545h1v1h-1zM411 545h1v1h-1zM426 545h1v1h-1zM440 545h1v1h-1zM455 545h1v1h-1zM469 545h1v1h-1zM484 545h1v1h-1zM498 545h1v1h-1zM513 545h1v1h-1zM528 545h1v1h-1zM542 545h1v1h-1zM557 545h1v1h-1zM571 545h1v1h-1zM586 545h1v1h-1zM601 545h1v1h-1zM615 545h1v1h-1zM630 545h1v1h-1zM644 545h1v1h-1zM659 545h1v1h-1zM674 545h1v1h-1zM688 545h1v1h-1zM703 545h1v1h-1zM717 545h1v1h-1zM732 545h1v1h-1zM747 545h1v1h-1zM761 545h1v1h-1zM776 545h1v1h-1zM790 545h1v1h-1zM805 545h1v1h-1zM820 545h1v1h-1zM834 545h1v1h-1zM849 545h1v1h-1zM863 545h1v1h-1zM878 545h1v1h-1zM893 545h1v1h-1zM907 545h1v1h-1zM922 545h1v1h-1zM936 545h1v1h-1zM951 545h1v1h-1zM966 545h1v1h-1zM980 545h1v1h-1zM995 545h1v1h-1zM1009 545h1v1h-1zM17 560h1v1h-1zM31 560h1v1h-1zM46 560h1v1h-1zM61 560h1v1h-1zM75 560h1v1h-1zM90 560h1v1h-1zM104 560h1v1h-1zM119 560h1v1h-1zM134 560h1v1h-1zM148 560h1v1h-1zM163 560h1v1h-1zM177 560h1v1h-1zM192 560h1v1h-1zM207 560h1v1h-1zM221 560h1v1h-1zM236 560h1v1h-1zM250 560h1v1h-1zM265 560h1v1h-1zM280 560h1v1h-1zM294 560h1v1h-1zM309 560h1v1h-1zM323 560h1v1h-1zM338 560h1v1h-1zM353 560h1v1h-1zM367 560h1v1h-1zM382 560h1v1h-1zM396 560h1v1h-1zM411 560h1v1h-1zM426 560h1v1h-1zM440 560h1v1h-1zM455 560h1v1h-1zM469 560h1v1h-1zM484 560h1v1h-1zM498 560h1v1h-1zM513 560h1v1h-1zM528 560h1v1h-1zM542 560h1v1h-1zM557 560h1v1h-1zM571 560h1v1h-1zM586 560h1v1h-1zM601 560h1v1h-1zM615 560h1v1h-1zM630 560h1v1h-1zM644 560h1v1h-1zM659 560h1v1h-1zM674 560h1v1h-1zM688 560h1v1h-1zM703 560h1v1h-1zM717 560h1v1h-1zM732 560h1v1h-1zM747 560h1v1h-1zM761 560h1v1h-1zM776 560h1v1h-1zM790 560h1v1h-1zM805 560h1v1h-1zM820 560h1v1h-1zM834 560h1v1h-1zM849 560h1v1h-1zM863 560h1v1h-1zM878 560h1v1h-1zM893 560h1v1h-1zM907 560h1v1h-1zM922 560h1v1h-1zM936 560h1v1h-1zM951 560h1v1h-1zM966 560h1v1h-1zM980 560h1v1h-1zM995 560h1v1h-1zM1009 560h1v1h-1zM17 575h1v1h-1zM31 575h1v1h-1zM46 575h1v1h-1zM61 575h1v1h-1zM75 575h1v1h-1zM90 575h1v1h-1zM104 575h1v1h-1zM119 575h1v1h-1zM134 575h1v1h-1zM148 575h1v1h-1zM163 575h1v1h-1zM177 575h1v1h-1zM192 575h1v1h-1zM207 575h1v1h-1zM221 575h1v1h-1zM236 575h1v1h-1zM250 575h1v1h-1zM265 575h1v1h-1zM280 575h1v1h-1zM294 575h1v1h-1zM309 575h1v1h-1zM323 575h1v1h-1zM338 575h1v1h-1zM353 575h1v1h-1zM367 575h1v1h-1zM382 575h1v1h-1zM396 575h1v1h-1zM411 575h1v1h-1zM426 575h1v1h-1zM440 575h1v1h-1zM455 575h1v1h-1zM469 575h1v1h-1zM484 575h1v1h-1zM498 575h1v1h-1zM513 575h1v1h-1zM528 575h1v1h-1zM542 575h1v1h-1zM557 575h1v1h-1zM571 575h1v1h-1zM586 575h1v1h-1zM601 575h1v1h-1zM615 575h1v1h-1zM630 575h1v1h-1zM644 575h1v1h-1zM659 575h1v1h-1zM674 575h1v1h-1zM688 575h1v1h-1zM703 575h1v1h-1zM717 575h1v1h-1zM732 575h1v1h-1zM747 575h1v1h-1zM761 575h1v1h-1zM776 575h1v1h-1zM790 575h1v1h-1zM805 575h1v1h-1zM820 575h1v1h-1zM834 575h1v1h-1zM849 575h1v1h-1zM863 575h1v1h-1zM878 575h1v1h-1zM893 575h1v1h-1zM907 575h1v1h-1zM922 575h1v1h-1zM936 575h1v1h-1zM951 575h1v1h-1zM966 575h1v1h-1zM980 575h1v1h-1zM995 575h1v1h-1zM1009 575h1v1h-1zM17 589h1v1h-1zM31 589h1v1h-1zM46 589h1v1h-1zM61 589h1v1h-1zM75 589h1v1h-1zM90 589h1v1h-1zM104 589h1v1h-1zM119 589h1v1h-1zM134 589h1v1h-1zM148 589h1v1h-1zM163 589h1v1h-1zM177 589h1v1h-1zM192 589h1v1h-1zM207 589h1v1h-1zM221 589h1v1h-1zM236 589h1v1h-1zM250 589h1v1h-1zM265 589h1v1h-1zM280 589h1v1h-1zM294 589h1v1h-1zM309 589h1v1h-1zM323 589h1v1h-1zM338 589h1v1h-1zM353 589h1v1h-1zM367 589h1v1h-1zM382 589h1v1h-1zM396 589h1v1h-1zM411 589h1v1h-1zM426 589h1v1h-1zM440 589h1v1h-1zM455 589h1v1h-1zM469 589h1v1h-1zM484 589h1v1h-1zM498 589h1v1h-1zM513 589h1v1h-1zM528 589h1v1h-1zM542 589h1v1h-1zM557 589h1v1h-1zM571 589h1v1h-1zM586 589h1v1h-1zM601 589h1v1h-1zM615 589h1v1h-1zM630 589h1v1h-1zM644 589h1v1h-1zM659 589h1v1h-1zM674 589h1v1h-1zM688 589h1v1h-1zM703 589h1v1h-1zM717 589h1v1h-1zM732 589h1v1h-1zM747 589h1v1h-1zM761 589h1v1h-1zM776 589h1v1h-1zM790 589h1v1h-1zM805 589h1v1h-1zM820 589h1v1h-1zM834 589h1v1h-1zM849 589h1v1h-1zM863 589h1v1h-1zM878 589h1v1h-1zM893 589h1v1h-1zM907 589h1v1h-1zM922 589h1v1h-1zM936 589h1v1h-1zM951 589h1v1h-1zM966 589h1v1h-1zM980 589h1v1h-1zM995 589h1v1h-1zM1009 589h1v1h-1zM17 604h1v1h-1zM31 604h1v1h-1zM46 604h1v1h-1zM61 604h1v1h-1zM75 604h1v1h-1zM90 604h1v1h-1zM104 604h1v1h-1zM119 604h1v1h-1zM134 604h1v1h-1zM148 604h1v1h-1zM163 604h1v1h-1zM177 604h1v1h-1zM192 604h1v1h-1zM207 604h1v1h-1zM221 604h1v1h-1zM236 604h1v1h-1zM250 604h1v1h-1zM265 604h1v1h-1zM280 604h1v1h-1zM294 604h1v1h-1zM309 604h1v1h-1zM323 604h1v1h-1zM338 604h1v1h-1zM353 604h1v1h-1zM367 604h1v1h-1zM382 604h1v1h-1zM396 604h1v1h-1zM411 604h1v1h-1zM426 604h1v1h-1zM440 604h1v1h-1zM455 604h1v1h-1zM469 604h1v1h-1zM484 604h1v1h-1zM498 604h1v1h-1zM513 604h1v1h-1zM528 604h1v1h-1zM542 604h1v1h-1zM557 604h1v1h-1zM571 604h1v1h-1zM586 604h1v1h-1zM601 604h1v1h-1zM615 604h1v1h-1zM630 604h1v1h-1zM644 604h1v1h-1zM659 604h1v1h-1zM674 604h1v1h-1zM688 604h1v1h-1zM703 604h1v1h-1zM717 604h1v1h-1zM732 604h1v1h-1zM747 604h1v1h-1zM761 604h1v1h-1zM776 604h1v1h-1zM790 604h1v1h-1zM805 604h1v1h-1zM820 604h1v1h-1zM834 604h1v1h-1zM849 604h1v1h-1zM863 604h1v1h-1zM878 604h1v1h-1zM893 604h1v1h-1zM907 604h1v1h-1zM922 604h1v1h-1zM936 604h1v1h-1zM951 604h1v1h-1zM966 604h1v1h-1zM980 604h1v1h-1zM995 604h1v1h-1zM1009 604h1v1h-1zM17 618h1v1h-1zM31 618h1v1h-1zM46 618h1v1h-1zM61 618h1v1h-1zM75 618h1v1h-1zM90 618h1v1h-1zM104 618h1v1h-1zM119 618h1v1h-1zM134 618h1v1h-1zM148 618h1v1h-1zM163 618h1v1h-1zM177 618h1v1h-1zM192 618h1v1h-1zM207 618h1v1h-1zM221 618h1v1h-1zM236 618h1v1h-1zM250 618h1v1h-1zM265 618h1v1h-1zM280 618h1v1h-1zM294 618h1v1h-1zM309 618h1v1h-1zM323 618h1v1h-1zM338 618h1v1h-1zM353 618h1v1h-1zM367 618h1v1h-1zM382 618h1v1h-1zM396 618h1v1h-1zM411 618h1v1h-1zM426 618h1v1h-1zM440 618h1v1h-1zM455 618h1v1h-1zM469 618h1v1h-1zM484 618h1v1h-1zM498 618h1v1h-1zM513 618h1v1h-1zM528 618h1v1h-1zM542 618h1v1h-1zM557 618h1v1h-1zM571 618h1v1h-1zM586 618h1v1h-1zM601 618h1v1h-1zM615 618h1v1h-1zM630 618h1v1h-1zM644 618h1v1h-1zM659 618h1v1h-1zM674 618h1v1h-1zM688 618h1v1h-1zM703 618h1v1h-1zM717 618h1v1h-1zM732 618h1v1h-1zM747 618h1v1h-1zM761 618h1v1h-1zM776 618h1v1h-1zM790 618h1v1h-1zM805 618h1v1h-1zM820 618h1v1h-1zM834 618h1v1h-1zM849 618h1v1h-1zM863 618h1v1h-1zM878 618h1v1h-1zM893 618h1v1h-1zM907 618h1v1h-1zM922 618h1v1h-1zM936 618h1v1h-1zM951 618h1v1h-1zM966 618h1v1h-1zM980 618h1v1h-1zM995 618h1v1h-1zM1009 618h1v1h-1zM17 633h1v1h-1zM31 633h1v1h-1zM46 633h1v1h-1zM61 633h1v1h-1zM75 633h1v1h-1zM90 633h1v1h-1zM104 633h1v1h-1zM119 633h1v1h-1zM134 633h1v1h-1zM148 633h1v1h-1zM163 633h1v1h-1zM177 633h1v1h-1zM192 633h1v1h-1zM207 633h1v1h-1zM221 633h1v1h-1zM236 633h1v1h-1zM250 633h1v1h-1zM265 633h1v1h-1zM280 633h1v1h-1zM294 633h1v1h-1zM309 633h1v1h-1zM323 633h1v1h-1zM338 633h1v1h-1zM353 633h1v1h-1zM367 633h1v1h-1zM382 633h1v1h-1zM396 633h1v1h-1zM411 633h1v1h-1zM426 633h1v1h-1zM440 633h1v1h-1zM455 633h1v1h-1zM469 633h1v1h-1zM484 633h1v1h-1zM498 633h1v1h-1zM513 633h1v1h-1zM528 633h1v1h-1zM542 633h1v1h-1zM557 633h1v1h-1zM571 633h1v1h-1zM586 633h1v1h-1zM601 633h1v1h-1zM615 633h1v1h-1zM630 633h1v1h-1zM644 633h1v1h-1zM659 633h1v1h-1zM674 633h1v1h-1zM688 633h1v1h-1zM703 633h1v1h-1zM717 633h1v1h-1zM732 633h1v1h-1zM747 633h1v1h-1zM761 633h1v1h-1zM776 633h1v1h-1zM790 633h1v1h-1zM805 633h1v1h-1zM820 633h1v1h-1zM834 633h1v1h-1zM849 633h1v1h-1zM863 633h1v1h-1zM878 633h1v1h-1zM893 633h1v1h-1zM907 633h1v1h-1zM922 633h1v1h-1zM936 633h1v1h-1zM951 633h1v1h-1zM966 633h1v1h-1zM980 633h1v1h-1zM995 633h1v1h-1zM1009 633h1v1h-1zM17 648h1v1h-1zM31 648h1v1h-1zM46 648h1v1h-1zM61 648h1v1h-1zM75 648h1v1h-1zM90 648h1v1h-1zM104 648h1v1h-1zM119 648h1v1h-1zM134 648h1v1h-1zM148 648h1v1h-1zM163 648h1v1h-1zM177 648h1v1h-1zM192 648h1v1h-1zM207 648h1v1h-1zM221 648h1v1h-1zM236 648h1v1h-1zM250 648h1v1h-1zM265 648h1v1h-1zM280 648h1v1h-1zM294 648h1v1h-1zM309 648h1v1h-1zM323 648h1v1h-1zM338 648h1v1h-1zM353 648h1v1h-1zM367 648h1v1h-1zM382 648h1v1h-1zM396 648h1v1h-1zM411 648h1v1h-1zM426 648h1v1h-1zM440 648h1v1h-1zM455 648h1v1h-1zM469 648h1v1h-1zM484 648h1v1h-1zM498 648h1v1h-1zM513 648h1v1h-1zM528 648h1v1h-1zM542 648h1v1h-1zM557 648h1v1h-1zM571 648h1v1h-1zM586 648h1v1h-1zM601 648h1v1h-1zM615 648h1v1h-1zM630 648h1v1h-1zM644 648h1v1h-1zM659 648h1v1h-1zM674 648h1v1h-1zM688 648h1v1h-1zM703 648h1v1h-1zM717 648h1v1h-1zM732 648h1v1h-1zM747 648h1v1h-1zM761 648h1v1h-1zM776 648h1v1h-1zM790 648h1v1h-1zM805 648h1v1h-1zM820 648h1v1h-1zM834 648h1v1h-1zM849 648h1v1h-1zM863 648h1v1h-1zM878 648h1v1h-1zM893 648h1v1h-1zM907 648h1v1h-1zM922 648h1v1h-1zM936 648h1v1h-1zM951 648h1v1h-1zM966 648h1v1h-1zM980 648h1v1h-1zM995 648h1v1h-1zM1009 648h1v1h-1zM17 662h1v1h-1zM31 662h1v1h-1zM46 662h1v1h-1zM61 662h1v1h-1zM75 662h1v1h-1zM90 662h1v1h-1zM104 662h1v1h-1zM119 662h1v1h-1zM134 662h1v1h-1zM148 662h1v1h-1zM163 662h1v1h-1zM177 662h1v1h-1zM192 662h1v1h-1zM207 662h1v1h-1zM221 662h1v1h-1zM236 662h1v1h-1zM250 662h1v1h-1zM265 662h1v1h-1zM280 662h1v1h-1zM294 662h1v1h-1zM309 662h1v1h-1zM323 662h1v1h-1zM338 662h1v1h-1zM353 662h1v1h-1zM367 662h1v1h-1zM382 662h1v1h-1zM396 662h1v1h-1zM411 662h1v1h-1zM426 662h1v1h-1zM440 662h1v1h-1zM455 662h1v1h-1zM469 662h1v1h-1zM484 662h1v1h-1zM498 662h1v1h-1zM513 662h1v1h-1zM528 662h1v1h-1zM542 662h1v1h-1zM557 662h1v1h-1zM571 662h1v1h-1zM586 662h1v1h-1zM601 662h1v1h-1zM615 662h1v1h-1zM630 662h1v1h-1zM644 662h1v1h-1zM659 662h1v1h-1zM674 662h1v1h-1zM688 662h1v1h-1zM703 662h1v1h-1zM717 662h1v1h-1zM732 662h1v1h-1zM747 662h1v1h-1zM761 662h1v1h-1zM776 662h1v1h-1zM790 662h1v1h-1zM805 662h1v1h-1zM820 662h1v1h-1zM834 662h1v1h-1zM849 662h1v1h-1zM863 662h1v1h-1zM878 662h1v1h-1zM893 662h1v1h-1zM907 662h1v1h-1zM922 662h1v1h-1zM936 662h1v1h-1zM951 662h1v1h-1zM966 662h1v1h-1zM980 662h1v1h-1zM995 662h1v1h-1zM1009 662h1v1h-1zM17 677h1v1h-1zM31 677h1v1h-1zM46 677h1v1h-1zM61 677h1v1h-1zM75 677h1v1h-1zM90 677h1v1h-1zM104 677h1v1h-1zM119 677h1v1h-1zM134 677h1v1h-1zM148 677h1v1h-1zM163 677h1v1h-1zM177 677h1v1h-1zM192 677h1v1h-1zM207 677h1v1h-1zM221 677h1v1h-1zM236 677h1v1h-1zM250 677h1v1h-1zM265 677h1v1h-1zM280 677h1v1h-1zM294 677h1v1h-1zM309 677h1v1h-1zM323 677h1v1h-1zM338 677h1v1h-1zM353 677h1v1h-1zM367 677h1v1h-1zM382 677h1v1h-1zM396 677h1v1h-1zM411 677h1v1h-1zM426 677h1v1h-1zM440 677h1v1h-1zM455 677h1v1h-1zM469 677h1v1h-1zM484 677h1v1h-1zM498 677h1v1h-1zM513 677h1v1h-1zM528 677h1v1h-1zM542 677h1v1h-1zM557 677h1v1h-1zM571 677h1v1h-1zM586 677h1v1h-1zM601 677h1v1h-1zM615 677h1v1h-1zM630 677h1v1h-1zM644 677h1v1h-1zM659 677h1v1h-1zM674 677h1v1h-1zM688 677h1v1h-1zM703 677h1v1h-1zM717 677h1v1h-1zM732 677h1v1h-1zM747 677h1v1h-1zM761 677h1v1h-1zM776 677h1v1h-1zM790 677h1v1h-1zM805 677h1v1h-1zM820 677h1v1h-1zM834 677h1v1h-1zM849 677h1v1h-1zM863 677h1v1h-1zM878 677h1v1h-1zM893 677h1v1h-1zM907 677h1v1h-1zM922 677h1v1h-1zM936 677h1v1h-1zM951 677h1v1h-1zM966 677h1v1h-1zM980 677h1v1h-1zM995 677h1v1h-1zM1009 677h1v1h-1zM17 691h1v1h-1zM31 691h1v1h-1zM46 691h1v1h-1zM61 691h1v1h-1zM75 691h1v1h-1zM90 691h1v1h-1zM104 691h1v1h-1zM119 691h1v1h-1zM134 691h1v1h-1zM148 691h1v1h-1zM163 691h1v1h-1zM177 691h1v1h-1zM192 691h1v1h-1zM207 691h1v1h-1zM221 691h1v1h-1zM236 691h1v1h-1zM250 691h1v1h-1zM265 691h1v1h-1zM280 691h1v1h-1zM294 691h1v1h-1zM309 691h1v1h-1zM323 691h1v1h-1zM338 691h1v1h-1zM353 691h1v1h-1zM367 691h1v1h-1zM382 691h1v1h-1zM396 691h1v1h-1zM411 691h1v1h-1zM426 691h1v1h-1zM440 691h1v1h-1zM455 691h1v1h-1zM469 691h1v1h-1zM484 691h1v1h-1zM498 691h1v1h-1zM513 691h1v1h-1zM528 691h1v1h-1zM542 691h1v1h-1zM557 691h1v1h-1zM571 691h1v1h-1zM586 691h1v1h-1zM601 691h1v1h-1zM615 691h1v1h-1zM630 691h1v1h-1zM644 691h1v1h-1zM659 691h1v1h-1zM674 691h1v1h-1zM688 691h1v1h-1zM703 691h1v1h-1zM717 691h1v1h-1zM732 691h1v1h-1zM747 691h1v1h-1zM761 691h1v1h-1zM776 691h1v1h-1zM790 691h1v1h-1zM805 691h1v1h-1zM820 691h1v1h-1zM834 691h1v1h-1zM849 691h1v1h-1zM863 691h1v1h-1zM878 691h1v1h-1zM893 691h1v1h-1zM907 691h1v1h-1zM922 691h1v1h-1zM936 691h1v1h-1zM951 691h1v1h-1zM966 691h1v1h-1zM980 691h1v1h-1zM995 691h1v1h-1zM1009 691h1v1h-1zM17 706h1v1h-1zM31 706h1v1h-1zM46 706h1v1h-1zM61 706h1v1h-1zM75 706h1v1h-1zM90 706h1v1h-1zM104 706h1v1h-1zM119 706h1v1h-1zM134 706h1v1h-1zM148 706h1v1h-1zM163 706h1v1h-1zM177 706h1v1h-1zM192 706h1v1h-1zM207 706h1v1h-1zM221 706h1v1h-1zM236 706h1v1h-1zM250 706h1v1h-1zM265 706h1v1h-1zM280 706h1v1h-1zM294 706h1v1h-1zM309 706h1v1h-1zM323 706h1v1h-1zM338 706h1v1h-1zM353 706h1v1h-1zM367 706h1v1h-1zM382 706h1v1h-1zM396 706h1v1h-1zM411 706h1v1h-1zM426 706h1v1h-1zM440 706h1v1h-1zM455 706h1v1h-1zM469 706h1v1h-1zM484 706h1v1h-1zM498 706h1v1h-1zM513 706h1v1h-1zM528 706h1v1h-1zM542 706h1v1h-1zM557 706h1v1h-1zM571 706h1v1h-1zM586 706h1v1h-1zM601 706h1v1h-1zM615 706h1v1h-1zM630 706h1v1h-1zM644 706h1v1h-1zM659 706h1v1h-1zM674 706h1v1h-1zM688 706h1v1h-1zM703 706h1v1h-1zM717 706h1v1h-1zM732 706h1v1h-1zM747 706h1v1h-1zM761 706h1v1h-1zM776 706h1v1h-1zM790 706h1v1h-1zM805 706h1v1h-1zM820 706h1v1h-1zM834 706h1v1h-1zM849 706h1v1h-1zM863 706h1v1h-1zM878 706h1v1h-1zM893 706h1v1h-1zM907 706h1v1h-1zM922 706h1v1h-1zM936 706h1v1h-1zM951 706h1v1h-1zM966 706h1v1h-1zM980 706h1v1h-1zM995 706h1v1h-1zM1009 706h1v1h-1zM17 721h1v1h-1zM31 721h1v1h-1zM46 721h1v1h-1zM61 721h1v1h-1zM75 721h1v1h-1zM90 721h1v1h-1zM104 721h1v1h-1zM119 721h1v1h-1zM134 721h1v1h-1zM148 721h1v1h-1zM163 721h1v1h-1zM177 721h1v1h-1zM192 721h1v1h-1zM207 721h1v1h-1zM221 721h1v1h-1zM236 721h1v1h-1zM250 721h1v1h-1zM265 721h1v1h-1zM280 721h1v1h-1zM294 721h1v1h-1zM309 721h1v1h-1zM323 721h1v1h-1zM338 721h1v1h-1zM353 721h1v1h-1zM367 721h1v1h-1zM382 721h1v1h-1zM396 721h1v1h-1zM411 721h1v1h-1zM426 721h1v1h-1zM440 721h1v1h-1zM455 721h1v1h-1zM469 721h1v1h-1zM484 721h1v1h-1zM498 721h1v1h-1zM513 721h1v1h-1zM528 721h1v1h-1zM542 721h1v1h-1zM557 721h1v1h-1zM571 721h1v1h-1zM586 721h1v1h-1zM601 721h1v1h-1zM615 721h1v1h-1zM630 721h1v1h-1zM644 721h1v1h-1zM659 721h1v1h-1zM674 721h1v1h-1zM688 721h1v1h-1zM703 721h1v1h-1zM717 721h1v1h-1zM732 721h1v1h-1zM747 721h1v1h-1zM761 721h1v1h-1zM776 721h1v1h-1zM790 721h1v1h-1zM805 721h1v1h-1zM820 721h1v1h-1zM834 721h1v1h-1zM849 721h1v1h-1zM863 721h1v1h-1zM878 721h1v1h-1zM893 721h1v1h-1zM907 721h1v1h-1zM922 721h1v1h-1zM936 721h1v1h-1zM951 721h1v1h-1zM966 721h1v1h-1zM980 721h1v1h-1zM995 721h1v1h-1zM1009 721h1v1h-1zM17 735h1v1h-1zM31 735h1v1h-1zM46 735h1v1h-1zM61 735h1v1h-1zM75 735h1v1h-1zM90 735h1v1h-1zM104 735h1v1h-1zM119 735h1v1h-1zM134 735h1v1h-1zM148 735h1v1h-1zM163 735h1v1h-1zM177 735h1v1h-1zM192 735h1v1h-1zM207 735h1v1h-1zM221 735h1v1h-1zM236 735h1v1h-1zM250 735h1v1h-1zM265 735h1v1h-1zM280 735h1v1h-1zM294 735h1v1h-1zM309 735h1v1h-1zM323 735h1v1h-1zM338 735h1v1h-1zM353 735h1v1h-1zM367 735h1v1h-1zM382 735h1v1h-1zM396 735h1v1h-1zM411 735h1v1h-1zM426 735h1v1h-1zM440 735h1v1h-1zM455 735h1v1h-1zM469 735h1v1h-1zM484 735h1v1h-1zM498 735h1v1h-1zM513 735h1v1h-1zM528 735h1v1h-1zM542 735h1v1h-1zM557 735h1v1h-1zM571 735h1v1h-1zM586 735h1v1h-1zM601 735h1v1h-1zM615 735h1v1h-1zM630 735h1v1h-1zM644 735h1v1h-1zM659 735h1v1h-1zM674 735h1v1h-1zM688 735h1v1h-1zM703 735h1v1h-1zM717 735h1v1h-1zM732 735h1v1h-1zM747 735h1v1h-1zM761 735h1v1h-1zM776 735h1v1h-1zM790 735h1v1h-1zM805 735h1v1h-1zM820 735h1v1h-1zM834 735h1v1h-1zM849 735h1v1h-1zM863 735h1v1h-1zM878 735h1v1h-1zM893 735h1v1h-1zM907 735h1v1h-1zM922 735h1v1h-1zM936 735h1v1h-1zM951 735h1v1h-1zM966 735h1v1h-1zM980 735h1v1h-1zM995 735h1v1h-1zM1009 735h1v1h-1zM17 750h1v1h-1zM31 750h1v1h-1zM46 750h1v1h-1zM61 750h1v1h-1zM75 750h1v1h-1zM90 750h1v1h-1zM104 750h1v1h-1zM119 750h1v1h-1zM134 750h1v1h-1zM148 750h1v1h-1zM163 750h1v1h-1zM177 750h1v1h-1zM192 750h1v1h-1zM207 750h1v1h-1zM221 750h1v1h-1zM236 750h1v1h-1zM250 750h1v1h-1zM265 750h1v1h-1zM280 750h1v1h-1zM294 750h1v1h-1zM309 750h1v1h-1zM323 750h1v1h-1zM338 750h1v1h-1zM353 750h1v1h-1zM367 750h1v1h-1zM382 750h1v1h-1zM396 750h1v1h-1zM411 750h1v1h-1zM426 750h1v1h-1zM440 750h1v1h-1zM455 750h1v1h-1zM469 750h1v1h-1zM484 750h1v1h-1zM498 750h1v1h-1zM513 750h1v1h-1zM528 750h1v1h-1zM542 750h1v1h-1zM557 750h1v1h-1zM571 750h1v1h-1zM586 750h1v1h-1zM601 750h1v1h-1zM615 750h1v1h-1zM630 750h1v1h-1zM644 750h1v1h-1zM659 750h1v1h-1zM674 750h1v1h-1zM688 750h1v1h-1zM703 750h1v1h-1zM717 750h1v1h-1zM732 750h1v1h-1zM747 750h1v1h-1zM761 750h1v1h-1zM776 750h1v1h-1zM790 750h1v1h-1zM805 750h1v1h-1zM820 750h1v1h-1zM834 750h1v1h-1zM849 750h1v1h-1zM863 750h1v1h-1zM878 750h1v1h-1zM893 750h1v1h-1zM907 750h1v1h-1zM922 750h1v1h-1zM936 750h1v1h-1zM951 750h1v1h-1zM966 750h1v1h-1zM980 750h1v1h-1zM995 750h1v1h-1zM1009 750h1v1h-1zM17 764h1v1h-1zM31 764h1v1h-1zM46 764h1v1h-1zM61 764h1v1h-1zM75 764h1v1h-1zM90 764h1v1h-1zM104 764h1v1h-1zM119 764h1v1h-1zM134 764h1v1h-1zM148 764h1v1h-1zM163 764h1v1h-1zM177 764h1v1h-1zM192 764h1v1h-1zM207 764h1v1h-1zM221 764h1v1h-1zM236 764h1v1h-1zM250 764h1v1h-1zM265 764h1v1h-1zM280 764h1v1h-1zM294 764h1v1h-1zM309 764h1v1h-1zM323 764h1v1h-1zM338 764h1v1h-1zM353 764h1v1h-1zM367 764h1v1h-1zM382 764h1v1h-1zM396 764h1v1h-1zM411 764h1v1h-1zM426 764h1v1h-1zM440 764h1v1h-1zM455 764h1v1h-1zM469 764h1v1h-1zM484 764h1v1h-1zM498 764h1v1h-1zM513 764h1v1h-1zM528 764h1v1h-1zM542 764h1v1h-1zM557 764h1v1h-1zM571 764h1v1h-1zM586 764h1v1h-1zM601 764h1v1h-1zM615 764h1v1h-1zM630 764h1v1h-1zM644 764h1v1h-1zM659 764h1v1h-1zM674 764h1v1h-1zM688 764h1v1h-1zM703 764h1v1h-1zM717 764h1v1h-1zM732 764h1v1h-1zM747 764h1v1h-1zM761 764h1v1h-1zM776 764h1v1h-1zM790 764h1v1h-1zM805 764h1v1h-1zM820 764h1v1h-1zM834 764h1v1h-1zM849 764h1v1h-1zM863 764h1v1h-1zM878 764h1v1h-1zM893 764h1v1h-1zM907 764h1v1h-1zM922 764h1v1h-1zM936 764h1v1h-1zM951 764h1v1h-1zM966 764h1v1h-1zM980 764h1v1h-1zM995 764h1v1h-1zM1009 764h1v1h-1zM17 779h1v1h-1zM31 779h1v1h-1zM46 779h1v1h-1zM61 779h1v1h-1zM75 779h1v1h-1zM90 779h1v1h-1zM104 779h1v1h-1zM119 779h1v1h-1zM134 779h1v1h-1zM148 779h1v1h-1zM163 779h1v1h-1zM177 779h1v1h-1zM192 779h1v1h-1zM207 779h1v1h-1zM221 779h1v1h-1zM236 779h1v1h-1zM250 779h1v1h-1zM265 779h1v1h-1zM280 779h1v1h-1zM294 779h1v1h-1zM309 779h1v1h-1zM323 779h1v1h-1zM338 779h1v1h-1zM353 779h1v1h-1zM367 779h1v1h-1zM382 779h1v1h-1zM396 779h1v1h-1zM411 779h1v1h-1zM426 779h1v1h-1zM440 779h1v1h-1zM455 779h1v1h-1zM469 779h1v1h-1zM484 779h1v1h-1zM498 779h1v1h-1zM513 779h1v1h-1zM528 779h1v1h-1zM542 779h1v1h-1zM557 779h1v1h-1zM571 779h1v1h-1zM586 779h1v1h-1zM601 779h1v1h-1zM615 779h1v1h-1zM630 779h1v1h-1zM644 779h1v1h-1zM659 779h1v1h-1zM674 779h1v1h-1zM688 779h1v1h-1zM703 779h1v1h-1zM717 779h1v1h-1zM732 779h1v1h-1zM747 779h1v1h-1zM761 779h1v1h-1zM776 779h1v1h-1zM790 779h1v1h-1zM805 779h1v1h-1zM820 779h1v1h-1zM834 779h1v1h-1zM849 779h1v1h-1zM863 779h1v1h-1zM878 779h1v1h-1zM893 779h1v1h-1zM907 779h1v1h-1zM922 779h1v1h-1zM936 779h1v1h-1zM951 779h1v1h-1zM966 779h1v1h-1zM980 779h1v1h-1zM995 779h1v1h-1zM1009 779h1v1h-1zM17 794h1v1h-1zM31 794h1v1h-1zM46 794h1v1h-1zM61 794h1v1h-1zM75 794h1v1h-1zM90 794h1v1h-1zM104 794h1v1h-1zM119 794h1v1h-1zM134 794h1v1h-1zM148 794h1v1h-1zM163 794h1v1h-1zM177 794h1v1h-1zM192 794h1v1h-1zM207 794h1v1h-1zM221 794h1v1h-1zM236 794h1v1h-1zM250 794h1v1h-1zM265 794h1v1h-1zM280 794h1v1h-1zM294 794h1v1h-1zM309 794h1v1h-1zM323 794h1v1h-1zM338 794h1v1h-1zM353 794h1v1h-1zM367 794h1v1h-1zM382 794h1v1h-1zM396 794h1v1h-1zM411 794h1v1h-1zM426 794h1v1h-1zM440 794h1v1h-1zM455 794h1v1h-1zM469 794h1v1h-1zM484 794h1v1h-1zM498 794h1v1h-1zM513 794h1v1h-1zM528 794h1v1h-1zM542 794h1v1h-1zM557 794h1v1h-1zM571 794h1v1h-1zM586 794h1v1h-1zM601 794h1v1h-1zM615 794h1v1h-1zM630 794h1v1h-1zM644 794h1v1h-1zM659 794h1v1h-1zM674 794h1v1h-1zM688 794h1v1h-1zM703 794h1v1h-1zM717 794h1v1h-1zM732 794h1v1h-1zM747 794h1v1h-1zM761 794h1v1h-1zM776 794h1v1h-1zM790 794h1v1h-1zM805 794h1v1h-1zM820 794h1v1h-1zM834 794h1v1h-1zM849 794h1v1h-1zM863 794h1v1h-1zM878 794h1v1h-1zM893 794h1v1h-1zM907 794h1v1h-1zM922 794h1v1h-1zM936 794h1v1h-1zM951 794h1v1h-1zM966 794h1v1h-1zM980 794h1v1h-1zM995 794h1v1h-1zM1009 794h1v1h-1zM17 808h1v1h-1zM31 808h1v1h-1zM46 808h1v1h-1zM61 808h1v1h-1zM75 808h1v1h-1zM90 808h1v1h-1zM104 808h1v1h-1zM119 808h1v1h-1zM134 808h1v1h-1zM148 808h1v1h-1zM163 808h1v1h-1zM177 808h1v1h-1zM192 808h1v1h-1zM207 808h1v1h-1zM221 808h1v1h-1zM236 808h1v1h-1zM250 808h1v1h-1zM265 808h1v1h-1zM280 808h1v1h-1zM294 808h1v1h-1zM309 808h1v1h-1zM323 808h1v1h-1zM338 808h1v1h-1zM353 808h1v1h-1zM367 808h1v1h-1zM382 808h1v1h-1zM396 808h1v1h-1zM411 808h1v1h-1zM426 808h1v1h-1zM440 808h1v1h-1zM455 808h1v1h-1zM469 808h1v1h-1zM484 808h1v1h-1zM498 808h1v1h-1zM513 808h1v1h-1zM528 808h1v1h-1zM542 808h1v1h-1zM557 808h1v1h-1zM571 808h1v1h-1zM586 808h1v1h-1zM601 808h1v1h-1zM615 808h1v1h-1zM630 808h1v1h-1zM644 808h1v1h-1zM659 808h1v1h-1zM674 808h1v1h-1zM688 808h1v1h-1zM703 808h1v1h-1zM717 808h1v1h-1zM732 808h1v1h-1zM747 808h1v1h-1zM761 808h1v1h-1zM776 808h1v1h-1zM790 808h1v1h-1zM805 808h1v1h-1zM820 808h1v1h-1zM834 808h1v1h-1zM849 808h1v1h-1zM863 808h1v1h-1zM878 808h1v1h-1zM893 808h1v1h-1zM907 808h1v1h-1zM922 808h1v1h-1zM936 808h1v1h-1zM951 808h1v1h-1zM966 808h1v1h-1zM980 808h1v1h-1zM995 808h1v1h-1zM1009 808h1v1h-1zM17 823h1v1h-1zM31 823h1v1h-1zM46 823h1v1h-1zM61 823h1v1h-1zM75 823h1v1h-1zM90 823h1v1h-1zM104 823h1v1h-1zM119 823h1v1h-1zM134 823h1v1h-1zM148 823h1v1h-1zM163 823h1v1h-1zM177 823h1v1h-1zM192 823h1v1h-1zM207 823h1v1h-1zM221 823h1v1h-1zM236 823h1v1h-1zM250 823h1v1h-1zM265 823h1v1h-1zM280 823h1v1h-1zM294 823h1v1h-1zM309 823h1v1h-1zM323 823h1v1h-1zM338 823h1v1h-1zM353 823h1v1h-1zM367 823h1v1h-1zM382 823h1v1h-1zM396 823h1v1h-1zM411 823h1v1h-1zM426 823h1v1h-1zM440 823h1v1h-1zM455 823h1v1h-1zM469 823h1v1h-1zM484 823h1v1h-1zM498 823h1v1h-1zM513 823h1v1h-1zM528 823h1v1h-1zM542 823h1v1h-1zM557 823h1v1h-1zM571 823h1v1h-1zM586 823h1v1h-1zM601 823h1v1h-1zM615 823h1v1h-1zM630 823h1v1h-1zM644 823h1v1h-1zM659 823h1v1h-1zM674 823h1v1h-1zM688 823h1v1h-1zM703 823h1v1h-1zM717 823h1v1h-1zM732 823h1v1h-1zM747 823h1v1h-1zM761 823h1v1h-1zM776 823h1v1h-1zM790 823h1v1h-1zM805 823h1v1h-1zM820 823h1v1h-1zM834 823h1v1h-1zM849 823h1v1h-1zM863 823h1v1h-1zM878 823h1v1h-1zM893 823h1v1h-1zM907 823h1v1h-1zM922 823h1v1h-1zM936 823h1v1h-1zM951 823h1v1h-1zM966 823h1v1h-1zM980 823h1v1h-1zM995 823h1v1h-1zM1009 823h1v1h-1zM17 837h1v1h-1zM31 837h1v1h-1zM46 837h1v1h-1zM61 837h1v1h-1zM75 837h1v1h-1zM90 837h1v1h-1zM104 837h1v1h-1zM119 837h1v1h-1zM134 837h1v1h-1zM148 837h1v1h-1zM163 837h1v1h-1zM177 837h1v1h-1zM192 837h1v1h-1zM207 837h1v1h-1zM221 837h1v1h-1zM236 837h1v1h-1zM250 837h1v1h-1zM265 837h1v1h-1zM280 837h1v1h-1zM294 837h1v1h-1zM309 837h1v1h-1zM323 837h1v1h-1zM338 837h1v1h-1zM353 837h1v1h-1zM367 837h1v1h-1zM382 837h1v1h-1zM396 837h1v1h-1zM411 837h1v1h-1zM426 837h1v1h-1zM440 837h1v1h-1zM455 837h1v1h-1zM469 837h1v1h-1zM484 837h1v1h-1zM498 837h1v1h-1zM513 837h1v1h-1zM528 837h1v1h-1zM542 837h1v1h-1zM557 837h1v1h-1zM571 837h1v1h-1zM586 837h1v1h-1zM601 837h1v1h-1zM615 837h1v1h-1zM630 837h1v1h-1zM644 837h1v1h-1zM659 837h1v1h-1zM674 837h1v1h-1zM688 837h1v1h-1zM703 837h1v1h-1zM717 837h1v1h-1zM732 837h1v1h-1zM747 837h1v1h-1zM761 837h1v1h-1zM776 837h1v1h-1zM790 837h1v1h-1zM805 837h1v1h-1zM820 837h1v1h-1zM834 837h1v1h-1zM849 837h1v1h-1zM863 837h1v1h-1zM878 837h1v1h-1zM893 837h1v1h-1zM907 837h1v1h-1zM922 837h1v1h-1zM936 837h1v1h-1zM951 837h1v1h-1zM966 837h1v1h-1zM980 837h1v1h-1zM995 837h1v1h-1zM1009 837h1v1h-1zM17 852h1v1h-1zM31 852h1v1h-1zM46 852h1v1h-1zM61 852h1v1h-1zM75 852h1v1h-1zM90 852h1v1h-1zM104 852h1v1h-1zM119 852h1v1h-1zM134 852h1v1h-1zM148 852h1v1h-1zM163 852h1v1h-1zM177 852h1v1h-1zM192 852h1v1h-1zM207 852h1v1h-1zM221 852h1v1h-1zM236 852h1v1h-1zM250 852h1v1h-1zM265 852h1v1h-1zM280 852h1v1h-1zM294 852h1v1h-1zM309 852h1v1h-1zM323 852h1v1h-1zM338 852h1v1h-1zM353 852h1v1h-1zM367 852h1v1h-1zM382 852h1v1h-1zM396 852h1v1h-1zM411 852h1v1h-1zM426 852h1v1h-1zM440 852h1v1h-1zM455 852h1v1h-1zM469 852h1v1h-1zM484 852h1v1h-1zM498 852h1v1h-1zM513 852h1v1h-1zM528 852h1v1h-1zM542 852h1v1h-1zM557 852h1v1h-1zM571 852h1v1h-1zM586 852h1v1h-1zM601 852h1v1h-1zM615 852h1v1h-1zM630 852h1v1h-1zM644 852h1v1h-1zM659 852h1v1h-1zM674 852h1v1h-1zM688 852h1v1h-1zM703 852h1v1h-1zM717 852h1v1h-1zM732 852h1v1h-1zM747 852h1v1h-1zM761 852h1v1h-1zM776 852h1v1h-1zM790 852h1v1h-1zM805 852h1v1h-1zM820 852h1v1h-1zM834 852h1v1h-1zM849 852h1v1h-1zM863 852h1v1h-1zM878 852h1v1h-1zM893 852h1v1h-1zM907 852h1v1h-1zM922 852h1v1h-1zM936 852h1v1h-1zM951 852h1v1h-1zM966 852h1v1h-1zM980 852h1v1h-1zM995 852h1v1h-1zM1009 852h1v1h-1z"/></svg>
<!-- schematic -->
<svg class="abs" style="left:0;top:0" width="1023" height="861">
<g shape-rendering="crispEdges" fill="none" stroke="#0000ff" stroke-width="1">
<path d="M228.5 611.5 H346 M382 611.5 H528 M484.5 611.5 V700 M228.5 611.5 V707 M228.5 738 V794.5 H484.5 V779.5 M484.5 723 V743 M484.5 728.5 H513 M228.5 662.5 H244"/>
<rect x="226" y="660" width="5" height="5" fill="#0000ff" stroke="none"/>
<rect x="482" y="609" width="5" height="5" fill="#0000ff" stroke="none"/>
<rect x="482" y="726" width="5" height="5" fill="#0000ff" stroke="none"/>
<rect x="358" y="792" width="5" height="5" fill="#0000ff" stroke="none"/>
<path d="M360.5 794 V801" />
</g>
<g fill="none" stroke="#0000ff" stroke-width="1" stroke-dasharray="3 3" shape-rendering="crispEdges">
<rect x="177.5" y="691.5" width="88" height="117"/>
<rect x="440.5" y="691.5" width="88" height="117"/>
<rect x="455.5" y="589.5" width="65" height="44"/>
</g>
<g fill="none" stroke="#000080" stroke-width="1" shape-rendering="crispEdges">
<path d="M346 611.5 H350 L353.5 604.5 L360.5 618 L367.5 604.5 L374.5 618 L378.5 611.5 H382"/>
<circle cx="228.5" cy="724.5" r="14"/>
<path d="M225 715.5 H233 M228.5 707 V720 M225 733.5 H233"/>
<path d="M477 711.5 H492 M477 715.5 H492"/>
<path d="M352 801.5 H369 L360.5 809.5 Z" stroke="#0000ff"/>
<path d="M484.5 743.5 H486 L491.5 747.5 V775 L486 779.5 H484.5 M484.5 700 V711 M484.5 715.5 V723 M491.5 756 Q485 751 479 756 Q485 760.5 491.5 756 M491.5 767 Q485 762 479 767 Q485 771.5 491.5 767"/>
</g>
</svg>
<div class="st" style="left:356px;top:594px">R2</div>
<div class="st" style="left:355px;top:619px">0.1</div>
<div class="st" style="left:244px;top:657px">U_Gen1</div>
<div class="sb" style="left:163px;top:679px">Generator1</div>
<div class="st" style="left:239px;top:701px">V1</div>
<div class="st" style="left:240px;top:738px;word-spacing:0.85px">SINE(0 10 10meg 0 0 0 10)</div>
<div class="st" style="left:305px;top:807px;word-spacing:1px">.tran 0.0015m</div>
<div class="sb" style="left:462px;top:577px">Knotenpunkt</div>
<div class="st" style="left:528px;top:607px">U_knotenp</div>
<div class="sb" style="left:495px;top:679px">Generator2</div>
<div class="st" style="left:457px;top:699px;letter-spacing:0.3px">50.4n</div>
<div class="st" style="left:488px;top:698px">C2</div>
<div class="st" style="left:514px;top:723px">U_Spk</div>
<div class="st" style="left:493px;top:748px">L2</div>
<div class="st" style="left:493px;top:767px;letter-spacing:0.25px">5.026n</div>
</body></html>
